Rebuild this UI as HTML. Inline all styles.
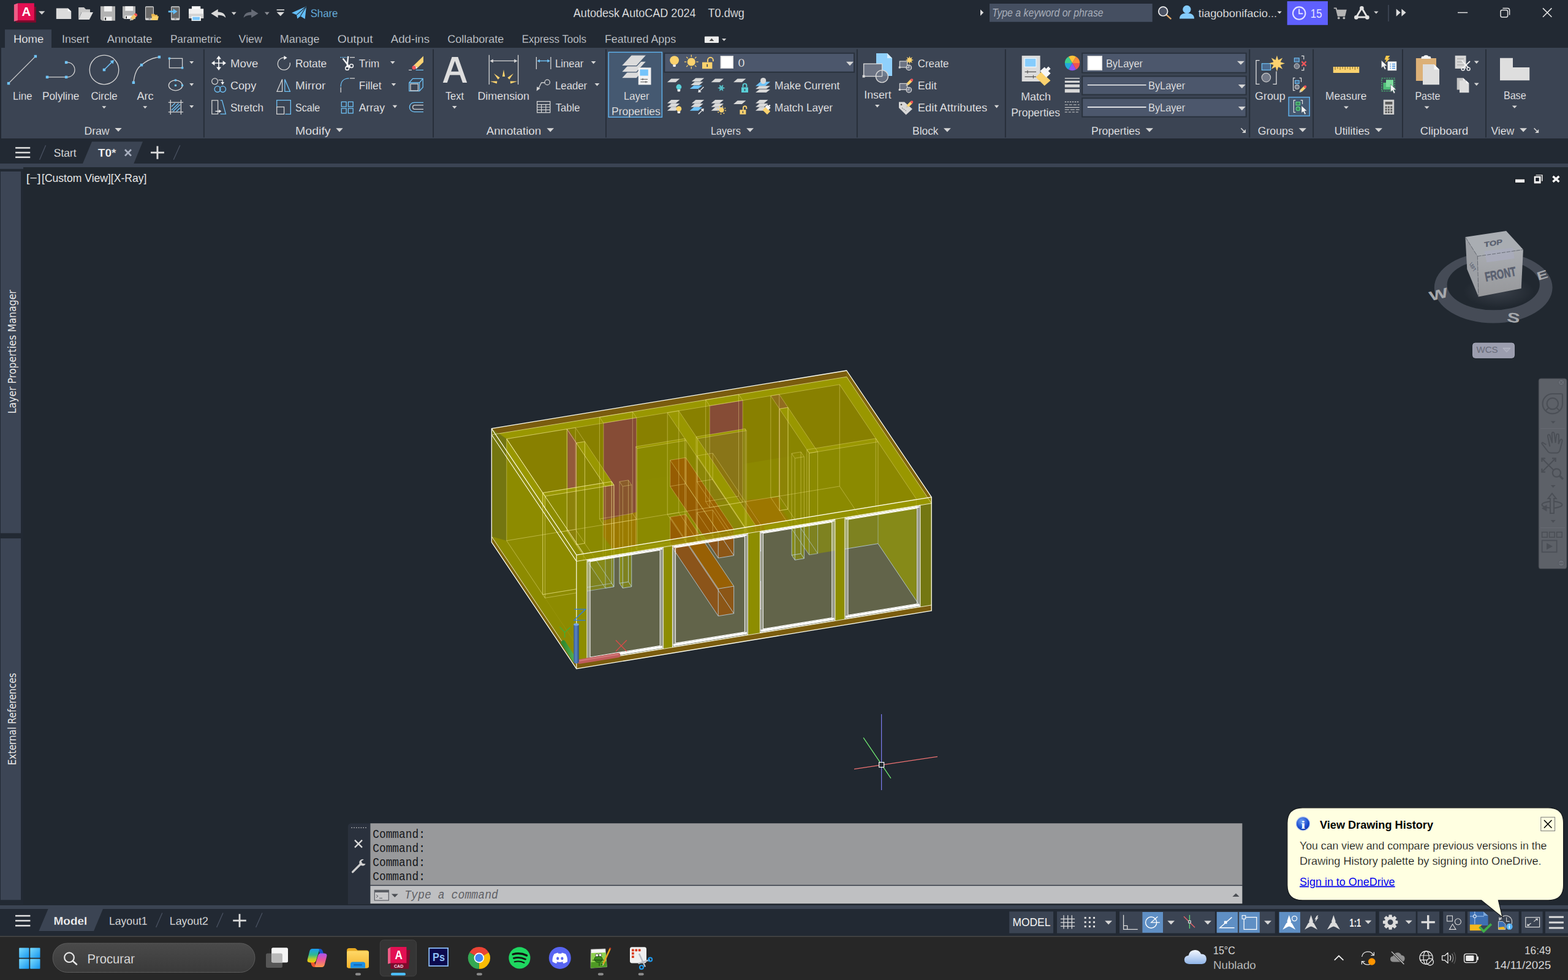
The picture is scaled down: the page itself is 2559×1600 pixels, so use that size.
<!DOCTYPE html>
<html lang="en"><head><meta charset="utf-8"><title>Autodesk AutoCAD 2024 - T0.dwg</title><style>html,body{margin:0;padding:0;background:#212830;overflow:hidden}body{width:2559px;height:1600px;position:relative;font-family:"Liberation Sans",sans-serif}.rg{position:absolute;overflow:hidden}.rg svg{display:block;position:absolute;left:0;top:0}text{font-family:"Liberation Sans",sans-serif;white-space:pre}#balloon{z-index:5}#cmdline{z-index:4}.mono text,text.mono{font-family:"Liberation Mono",monospace}</style></head>
<body>
<div id="titlebar" class="rg " style="left:0px;top:0px;width:2559px;height:48px;background:#222933;"><svg width="2559" height="48" viewBox="0 0 2559 48"><polygon points="26,10.9 58.9,10.9 58.9,36.8 26,36.8" fill="#7d0a2c"/><polygon points="22.9,7.4 29.1,5.2 29.1,33.2 22.9,35" fill="#ee5c86"/><rect x="29.1" y="5.2" width="26.7" height="28" fill="#e30f52"/><text x="35.4" y="26" font-size="21" fill="#fff" textLength="14.8" lengthAdjust="spacingAndGlyphs" font-weight="bold">A</text><polygon points="63,18.2 73.4,18.2 68.2,23.8" fill="#d0d0d0"/><polygon points="91.8,13.4 110.8,13.4 116.2,18.6 116.2,31 91.8,31" fill="#dcdcdc"/><polygon points="110.8,13.4 116.2,18.6 110.8,18.6" fill="#fafafa"/><polygon points="128.1,12 137,12 140.2,15.2 147,15.2 147,20 133,20 128.1,31.9" fill="#c8c8c8"/><polygon points="133.3,20 152,20 145.8,31.9 128.1,31.9" fill="#dedede"/><polygon points="164,10.2 188,10.2 188,33.7 166.7,33.7 164,31.5" fill="#b2b2b2"/><rect x="170" y="10.2" width="12.72" height="8.46" fill="#f2f2f2"/><rect x="169.52" y="27.36" width="12.96" height="6.35" fill="#f2f2f2"/><rect x="171.2" y="28.77" width="1.92" height="4" fill="#222"/><polygon points="200,10.2 221,10.2 221,31 202.5,31 200,29" fill="#b2b2b2"/><rect x="204.3" y="10.2" width="13" height="7.5" fill="#f2f2f2"/><rect x="203.6" y="25.5" width="12.5" height="5.5" fill="#f2f2f2"/><rect x="205.3" y="26.6" width="1.7" height="3.6" fill="#222"/><polygon points="212.2,33.6 213.3,28.6 219.3,22.6 223.2,26.5 217.2,32.5" fill="#f6c667"/><polygon points="212.2,33.6 213.3,28.6 217.2,32.5" fill="#bdbdbd"/><polygon points="218.6,23.3 220.2,21.7 222.6,21.9 224,23.4 224.2,25.6 222.6,27.2" fill="#ee5253"/><rect x="237" y="10.2" width="14" height="22.7" fill="#cfcfcf" rx="1.6"/><rect x="238.1" y="11.8" width="11.8" height="17.7" fill="#686868"/><rect x="242.5" y="30.5" width="3" height="1" fill="#555"/><polygon points="247.2,22.8 252,22.8 253.2,24.3 257,24.3 257,27 247.2,27" fill="#e9b64f"/><polygon points="248.4,26.6 259,26.6 257.4,32.9 246.8,32.9" fill="#fbd16a"/><rect x="279" y="10.2" width="14.3" height="22.7" fill="#cfcfcf" rx="1.6"/><rect x="280.1" y="11.8" width="12.1" height="17.7" fill="#686868"/><rect x="284.65" y="30.5" width="3" height="1" fill="#555"/><polygon points="274.7,17.4 282.6,17.4 282.6,14.2 289.6,18.8 282.6,23.4 282.6,20.2 274.7,20.2" fill="#63bdf6"/><rect x="313" y="10.2" width="14.2" height="5.8" fill="#ffffff"/><rect x="308" y="14.3" width="24.2" height="15.5" fill="#f0f0f0"/><rect x="308" y="22.5" width="24.2" height="7.3" fill="#d2d2d2"/><rect x="312.6" y="26.5" width="15.2" height="7.6" fill="#ffffff"/><rect x="314.2" y="27.6" width="11.8" height="5.2" fill="#7cc6fa"/><g transform="translate(344.3 15.1)"><path d="M0 7 L11.4 0 L11.4 4.3 C19 4.3 23.6 8 24 14 C21 10.6 17.5 9.7 11.4 9.7 L11.4 14 Z" fill="#d9d9d9"/></g><polygon points="377.8,19.8 385.7,19.8 381.75,24.4" fill="#d0d0d0"/><g transform="translate(421.6 15.1) scale(-1 1)"><path d="M0 7 L11.4 0 L11.4 4.3 C19 4.3 23.6 8 24 14 C21 10.6 17.5 9.7 11.4 9.7 L11.4 14 Z" fill="#666b76"/></g><polygon points="431.8,19.8 439.7,19.8 435.75,24.4" fill="#8a8d94"/><rect x="451.6" y="15.4" width="12.4" height="1.6" fill="#dcdcdc"/><polygon points="451.6,19.8 464,19.8 457.8,26.3" fill="#dcdcdc"/><polygon points="476,21.1 500,10.2 497.7,31 490.3,26.3 485.3,30.4 484.1,24.2" fill="#63bdf6"/><polyline points="484.3,24.2 499.4,11" fill="none" stroke="#222933" stroke-width="1.1"/><polyline points="490.3,26.3 499.6,11" fill="none" stroke="#222933" stroke-width="1.1"/><text x="506.7" y="27.6" font-size="18.5" fill="#72c4f8" textLength="44.7" lengthAdjust="spacingAndGlyphs" stroke="#222933" stroke-width="0.28">Share</text><text x="935.8" y="28.1" font-size="19.3" fill="#f8f8f8" textLength="279" lengthAdjust="spacingAndGlyphs" stroke="#222933" stroke-width="0.28" xml:space="preserve">Autodesk AutoCAD 2024    T0.dwg</text><polygon points="1600,15.5 1605.2,20.6 1600,25.7" fill="#dcdcdc"/><rect x="1615" y="6" width="265.7" height="29.7" fill="#454f61"/><text x="1618.9" y="27.2" font-size="18.3" fill="#a7adb9" textLength="181.7" lengthAdjust="spacingAndGlyphs" font-style="italic">Type a keyword or phrase</text><line x1="1903.6" y1="24.2" x2="1911.3" y2="31.2" stroke="#e2a86a" stroke-width="2.4"/><circle cx="1898.2" cy="18.6" r="7.4" fill="#4b5263" stroke="#f0f0f0" stroke-width="1.7"/><circle cx="1936.9" cy="15.4" r="6.6" fill="#84cbfb"/><path d="M1925 30.5 C1925 24 1930 21.6 1937 21.6 C1944 21.6 1949 24 1949 30.5 Z" fill="#84cbfb"/><text x="1955.8" y="27.6" font-size="18.5" fill="#f8f8f8" textLength="128.4" lengthAdjust="spacingAndGlyphs" stroke="#222933" stroke-width="0.28">tiagobonifacio...</text><polygon points="2084.6,18.6 2091.8,18.6 2088.2,22.6" fill="#e0e0e0"/><rect x="2100.7" y="2" width="66.3" height="38.8" fill="#5f60ff"/><circle cx="2120.2" cy="21.6" r="10.2" fill="none" stroke="#e2e2ff" stroke-width="2.1"/><polyline points="2120.2,14.6 2120.2,22.2 2126.4,22.2" fill="none" stroke="#e2e2ff" stroke-width="2"/><text x="2138.8" y="29.2" font-size="19.6" fill="#e4e4ff" textLength="18.8" lengthAdjust="spacingAndGlyphs">15</text><path d="M2176.8 13.4 H2180.6 L2183.6 25.8 H2194.4 L2196.6 16.8 H2181.6" fill="none" stroke="#b4b4b4" stroke-width="1.9"/><polygon points="2181.8,16.8 2196.6,16.8 2194.6,25 2183.8,25" fill="#b4b4b4"/><circle cx="2184.8" cy="29.4" r="1.9" fill="#b4b4b4"/><circle cx="2193.4" cy="29.4" r="1.9" fill="#b4b4b4"/><path d="M2222.4 13 L2231.6 28.4 M2222.4 13 L2213.2 28.4 M2213.6 28 H2231.2" fill="none" stroke="#e2e2e2" stroke-width="3"/><circle cx="2222.4" cy="13.2" r="3.3" fill="#e2e2e2"/><circle cx="2213.4" cy="28.4" r="3.3" fill="#e2e2e2"/><circle cx="2231.4" cy="28.4" r="3.3" fill="#e2e2e2"/><polygon points="2242.2,18.4 2249.6,18.4 2245.9,22.4" fill="#d0d0d0"/><rect x="2265.4" y="8" width="1.2" height="27" fill="#4a5262"/><polygon points="2278.7,14.4 2285.6,20.6 2278.7,26.8" fill="#dcdcdc"/><polygon points="2287.4,14.4 2294.6,20.6 2287.4,26.8" fill="#dcdcdc"/><rect x="2379" y="19.8" width="16.2" height="1.5" fill="#e4e4e4"/><rect x="2449" y="16.4" width="11.6" height="11.6" fill="none" stroke="#e4e4e4" stroke-width="1.5" rx="2.4"/><path d="M2452.4 13.4 H2460.4 Q2463.6 13.4 2463.6 16.6 V24.6" fill="none" stroke="#e4e4e4" stroke-width="1.5"/><path d="M2518 13.4 L2532.4 27.8 M2532.4 13.4 L2518 27.8" fill="none" stroke="#e4e4e4" stroke-width="1.6"/></svg></div>
<div id="menubar" class="rg " style="left:0px;top:48px;width:2559px;height:30px;background:#222933;"><svg width="2559" height="30" viewBox="0 48 2559 30"><rect x="8" y="48.2" width="76" height="29.8" fill="#3b4453"/><text x="21.9" y="70" font-size="18.5" fill="#fbfbfb" textLength="49.5" lengthAdjust="spacingAndGlyphs" stroke="#3b4453" stroke-width="0.28">Home</text><text x="101" y="70" font-size="18.5" fill="#d6d9de" textLength="44.5" lengthAdjust="spacingAndGlyphs" stroke="#222933" stroke-width="0.28">Insert</text><text x="174.7" y="70" font-size="18.5" fill="#d6d9de" textLength="73.9" lengthAdjust="spacingAndGlyphs" stroke="#222933" stroke-width="0.28">Annotate</text><text x="277.9" y="70" font-size="18.5" fill="#d6d9de" textLength="83.2" lengthAdjust="spacingAndGlyphs" stroke="#222933" stroke-width="0.28">Parametric</text><text x="389.6" y="70" font-size="18.5" fill="#d6d9de" textLength="38.3" lengthAdjust="spacingAndGlyphs" stroke="#222933" stroke-width="0.28">View</text><text x="456.8" y="70" font-size="18.5" fill="#d6d9de" textLength="64.7" lengthAdjust="spacingAndGlyphs" stroke="#222933" stroke-width="0.28">Manage</text><text x="550.7" y="70" font-size="18.5" fill="#d6d9de" textLength="57.8" lengthAdjust="spacingAndGlyphs" stroke="#222933" stroke-width="0.28">Output</text><text x="637.7" y="70" font-size="18.5" fill="#d6d9de" textLength="63.4" lengthAdjust="spacingAndGlyphs" stroke="#222933" stroke-width="0.28">Add-ins</text><text x="730.3" y="70" font-size="18.5" fill="#d6d9de" textLength="92.1" lengthAdjust="spacingAndGlyphs" stroke="#222933" stroke-width="0.28">Collaborate</text><text x="851.7" y="70" font-size="18.5" fill="#d6d9de" textLength="105.3" lengthAdjust="spacingAndGlyphs" stroke="#222933" stroke-width="0.28">Express Tools</text><text x="986.9" y="70" font-size="18.5" fill="#d6d9de" textLength="116.3" lengthAdjust="spacingAndGlyphs" stroke="#222933" stroke-width="0.28">Featured Apps</text><rect x="1149.9" y="59.6" width="23.1" height="10.4" fill="#ececec" rx="1"/><polygon points="1157.6,67 1165.2,67 1161.4,62.6" fill="#4a4a4a"/><polygon points="1178,63 1185.3,63 1181.65,67" fill="#d0d0d0"/></svg></div>
<div id="ribbon" class="rg " style="left:0px;top:78px;width:2559px;height:148px;background:#222933;"><svg width="2559" height="148" viewBox="0 78 2559 148"><rect x="2" y="78" width="2557" height="148" fill="#3b4453"/><rect x="331.9" y="80.5" width="1.9" height="144" fill="#272e39"/><rect x="706.1" y="80.5" width="1.9" height="144" fill="#272e39"/><rect x="988" y="80.5" width="1.9" height="144" fill="#272e39"/><rect x="1397.9" y="80.5" width="1.9" height="144" fill="#272e39"/><rect x="1639.9" y="80.5" width="1.9" height="144" fill="#272e39"/><rect x="2038.3" y="80.5" width="1.9" height="144" fill="#272e39"/><rect x="2142.2" y="80.5" width="1.9" height="144" fill="#272e39"/><rect x="2288" y="80.5" width="1.9" height="144" fill="#272e39"/><rect x="2424.1" y="80.5" width="1.9" height="144" fill="#272e39"/><line x1="14.5" y1="135.6" x2="57.6" y2="92.4" stroke="#d4d4d4" stroke-width="1.3"/><rect x="11.8" y="133.9" width="4.4" height="4.4" fill="#6fc3f8"/><rect x="55.7" y="89.8" width="4.4" height="4.4" fill="#6fc3f8"/><path d="M77 125.9 H108 M108.5 125.9 H110 A12 12 0 0 0 110 101.9 H108.5" fill="none" stroke="#d4d4d4" stroke-width="1.3"/><rect x="74.8" y="123.7" width="4.4" height="4.4" fill="#6fc3f8"/><rect x="105.9" y="123.7" width="4.4" height="4.4" fill="#6fc3f8"/><rect x="105.9" y="99.7" width="4.4" height="4.4" fill="#6fc3f8"/><circle cx="170" cy="114" r="23.8" fill="none" stroke="#d4d4d4" stroke-width="1.3"/><line x1="171.5" y1="112.5" x2="182.6" y2="101.4" stroke="#6fc3f8" stroke-width="1.5"/><polygon points="186,98 184.6,104.4 179.6,99.4" fill="#6fc3f8"/><rect x="167.8" y="111.8" width="4.4" height="4.4" fill="#6fc3f8"/><path d="M217.9 134.8 C219.5 120 224 110.5 231 106.1 C239 99 248 94.6 259.9 93.1" fill="none" stroke="#d4d4d4" stroke-width="1.3"/><rect x="215.7" y="132.6" width="4.4" height="4.4" fill="#6fc3f8"/><rect x="228.8" y="103.9" width="4.4" height="4.4" fill="#6fc3f8"/><rect x="257.7" y="90.9" width="4.4" height="4.4" fill="#6fc3f8"/><text x="21" y="162.8" font-size="18.4" fill="#fbfbfb" textLength="31.6" lengthAdjust="spacingAndGlyphs" stroke="#3b4453" stroke-width="0.28">Line</text><text x="69" y="162.8" font-size="18.4" fill="#fbfbfb" textLength="60.3" lengthAdjust="spacingAndGlyphs" stroke="#3b4453" stroke-width="0.28">Polyline</text><text x="148.4" y="162.8" font-size="18.4" fill="#fbfbfb" textLength="43.2" lengthAdjust="spacingAndGlyphs" stroke="#3b4453" stroke-width="0.28">Circle</text><text x="223.4" y="162.8" font-size="18.4" fill="#fbfbfb" textLength="27.2" lengthAdjust="spacingAndGlyphs" stroke="#3b4453" stroke-width="0.28">Arc</text><polygon points="166.4,173.2 173.4,173.2 169.9,177.2" fill="#d6d6d6"/><polygon points="233.3,173.2 240.3,173.2 236.8,177.2" fill="#d6d6d6"/><rect x="276.4" y="95.4" width="21.2" height="15.4" fill="none" stroke="#d4d4d4" stroke-width="1.3"/><rect x="274.7" y="93.7" width="3.4" height="3.4" fill="#6fc3f8"/><rect x="295.9" y="109.1" width="3.4" height="3.4" fill="#6fc3f8"/><polygon points="309.2,100 316.2,100 312.7,104.3" fill="#d6d6d6"/><ellipse cx="286.5" cy="139.4" rx="11.2" ry="8.4" fill="none" stroke="#d4d4d4" stroke-width="1.3"/><rect x="284.9" y="129.4" width="3.2" height="3.2" fill="#6fc3f8"/><rect x="284.9" y="137.8" width="3.2" height="3.2" fill="#6fc3f8"/><rect x="296" y="137.8" width="3.2" height="3.2" fill="#6fc3f8"/><polygon points="309.2,136 316.2,136 312.7,140.4" fill="#d6d6d6"/><g stroke="#d4d4d4" stroke-width="1.3"><line x1="278.3" y1="163" x2="278.3" y2="187"/><line x1="295.4" y1="163" x2="295.4" y2="187"/><line x1="274.8" y1="167.2" x2="299" y2="167.2"/><line x1="274.8" y1="182.9" x2="299" y2="182.9"/></g><g stroke="#6fc3f8" stroke-width="1.4"><line x1="280" y1="174" x2="285.6" y2="168.6"/><line x1="280" y1="180" x2="291.4" y2="168.8"/><line x1="282.4" y1="181.8" x2="294" y2="170.4"/><line x1="288" y1="181.8" x2="294" y2="176"/></g><polygon points="309.2,172.1 316.2,172.1 312.7,176.5" fill="#d6d6d6"/><text x="137.4" y="219.8" font-size="18.4" fill="#fbfbfb" textLength="41.2" lengthAdjust="spacingAndGlyphs" stroke="#3b4453" stroke-width="0.28">Draw</text><polygon points="187.5,209 198.7,209 193.1,215" fill="#d6d6d6"/><g transform="translate(345 91)"><path d="M12 3 V21 M3 12 H21" fill="none" stroke="#f4f4f4" stroke-width="1.7"/><polygon points="12,0 16,5.4 8,5.4" fill="#f4f4f4"/><polygon points="12,24 16,18.6 8,18.6" fill="#f4f4f4"/><polygon points="0,12 5.4,8 5.4,16" fill="#f4f4f4"/><polygon points="24,12 18.6,8 18.6,16" fill="#f4f4f4"/></g><g transform="translate(345 127)"><circle cx="5.6" cy="5.8" r="4.9" fill="none" stroke="#d4d4d4" stroke-width="1.3"/><path d="M11.6 3.6 H18.2 V8" fill="none" stroke="#d4d4d4" stroke-width="1.3"/><polygon points="18.2,11.4 15.4,7 21,7" fill="#f4f4f4"/><circle cx="10" cy="18.6" r="4.9" fill="none" stroke="#6fc3f8" stroke-width="1.3"/><circle cx="18.6" cy="18.6" r="4.9" fill="none" stroke="#6fc3f8" stroke-width="1.3"/></g><g transform="translate(345 163)"><path d="M10.6 0.8 H0.8 V23.2 H10.6 Z" fill="none" stroke="#d4d4d4" stroke-width="1.3"/><path d="M14.6 0.8 H17.4 L23.4 23.2 H14.6" fill="none" stroke="#6fc3f8" stroke-width="1.3"/><path d="M6.4 18.6 H13.4" fill="none" stroke="#f4f4f4" stroke-width="1.3"/><polygon points="16.4,18.6 12.4,16 12.4,21.2" fill="#f4f4f4"/></g><g transform="translate(452 91)"><path d="M13.2 3.3 A10 10 0 1 0 21.2 11.4" fill="none" stroke="#d4d4d4" stroke-width="1.3"/><polygon points="11.4,0 16.6,3.3 11.4,6.8" fill="#f4f4f4"/></g><g transform="translate(451 127)"><path d="M9.6 2.4 V22.4 H1 Z" fill="none" stroke="#d4d4d4" stroke-width="1.3"/><path d="M13.8 2.4 V22.4 H22.4 Z" fill="none" stroke="#6fc3f8" stroke-width="1.3"/></g><g transform="translate(451 163)"><path d="M0.7 11 V0.7 H23.3 V23.3 H14.6" fill="none" stroke="#6fc3f8" stroke-width="1.3"/><rect x="0.7" y="11.6" width="11.9" height="11.7" fill="none" stroke="#d4d4d4" stroke-width="1.3"/></g><g transform="translate(555 91)"><path d="M0.3 2.7 H11" fill="none" stroke="#6fc3f8" stroke-width="1.2" stroke-dasharray="2 1.2"/><path d="M16 2.7 H24" fill="none" stroke="#d4d4d4" stroke-width="1.3"/><path d="M4.6 4.4 L16.2 19.6 M13.2 0.8 L11.4 19" fill="none" stroke="#f4f4f4" stroke-width="2.4"/><circle cx="11.6" cy="20.4" r="2.9" fill="none" stroke="#f4f4f4" stroke-width="1.5"/><circle cx="18.6" cy="16.6" r="2.9" fill="none" stroke="#f4f4f4" stroke-width="1.5"/></g><g transform="translate(555 127)"><path d="M16 0.9 H24 M1.2 15.6 V24" fill="none" stroke="#d4d4d4" stroke-width="1.3"/><path d="M1.2 14.4 C1.2 6 6 0.9 14.6 0.9" fill="none" stroke="#6fc3f8" stroke-width="1.3"/></g><g transform="translate(555 163)"><rect x="2.3" y="3.3" width="7.8" height="7.8" fill="none" stroke="#6fc3f8" stroke-width="1.3"/><rect x="13.4" y="3.3" width="7.8" height="7.8" fill="none" stroke="#6fc3f8" stroke-width="1.3"/><rect x="2.3" y="14" width="7.8" height="7.8" fill="none" stroke="#6fc3f8" stroke-width="1.3"/><rect x="13.4" y="14" width="7.8" height="7.8" fill="none" stroke="#6fc3f8" stroke-width="1.3"/></g><g transform="translate(667 91)"><polygon points="9,15 24,0.6 24,10.4 14.6,19.6" fill="#fcd273"/><polygon points="9,15 14.6,19.6 12.4,21.6 7,17.2" fill="#f2f2f2"/><circle cx="8.6" cy="19.4" r="3.1" fill="#f0565a"/><path d="M0 23.4 H5" fill="none" stroke="#d4d4d4" stroke-width="1.2"/><path d="M11.6 23.4 H24" fill="none" stroke="#6fc3f8" stroke-width="1.2"/></g><g transform="translate(667 127)"><path d="M0.8 8 L6.6 1.4 H23.2 V15.4 L17.6 21.6 H0.8 Z M23.2 1.4 L17.6 8 M0.8 8 H17.6 V21.6" fill="none" stroke="#6fc3f8" stroke-width="1.3"/><rect x="3" y="10" width="12.4" height="11" fill="none" stroke="#d4d4d4" stroke-width="1.3"/></g><g transform="translate(667 163)"><path d="M24 4.4 H9 A7.6 7.6 0 0 0 9 19.6 H24" fill="none" stroke="#6fc3f8" stroke-width="1.4"/><path d="M24 8.6 H10 A3.4 3.4 0 0 0 10 15.4 H24" fill="none" stroke="#d4d4d4" stroke-width="1.3"/></g><text x="376" y="110.2" font-size="18.4" fill="#fbfbfb" textLength="45.4" lengthAdjust="spacingAndGlyphs" stroke="#3b4453" stroke-width="0.28">Move</text><text x="376" y="145.9" font-size="18.4" fill="#fbfbfb" textLength="42.2" lengthAdjust="spacingAndGlyphs" stroke="#3b4453" stroke-width="0.28">Copy</text><text x="376" y="182" font-size="18.4" fill="#fbfbfb" textLength="54" lengthAdjust="spacingAndGlyphs" stroke="#3b4453" stroke-width="0.28">Stretch</text><text x="482.1" y="110.2" font-size="18.4" fill="#fbfbfb" textLength="51.1" lengthAdjust="spacingAndGlyphs" stroke="#3b4453" stroke-width="0.28">Rotate</text><text x="482.1" y="145.9" font-size="18.4" fill="#fbfbfb" textLength="49.2" lengthAdjust="spacingAndGlyphs" stroke="#3b4453" stroke-width="0.28">Mirror</text><text x="482.1" y="182" font-size="18.4" fill="#fbfbfb" textLength="40.1" lengthAdjust="spacingAndGlyphs" stroke="#3b4453" stroke-width="0.28">Scale</text><text x="585.8" y="110.2" font-size="18.4" fill="#fbfbfb" textLength="33.5" lengthAdjust="spacingAndGlyphs" stroke="#3b4453" stroke-width="0.28">Trim</text><text x="585.8" y="145.9" font-size="18.4" fill="#fbfbfb" textLength="36.7" lengthAdjust="spacingAndGlyphs" stroke="#3b4453" stroke-width="0.28">Fillet</text><text x="585.8" y="182" font-size="18.4" fill="#fbfbfb" textLength="42.2" lengthAdjust="spacingAndGlyphs" stroke="#3b4453" stroke-width="0.28">Array</text><polygon points="637,100 644.6,100 640.8,104.6" fill="#d6d6d6"/><polygon points="638.7,135.9 646.2,135.9 642.45,140.5" fill="#d6d6d6"/><polygon points="640.7,171.8 648.2,171.8 644.45,176.4" fill="#d6d6d6"/><text x="482.1" y="220.2" font-size="18.4" fill="#fbfbfb" textLength="57.5" lengthAdjust="spacingAndGlyphs" stroke="#3b4453" stroke-width="0.28">Modify</text><polygon points="548.3,209.2 559.7,209.2 554,215.4" fill="#d6d6d6"/><polygon points="722.8,134.9 737.6,93 747.4,93 762.2,134.9 755,134.9 750.6,122.4 734.2,122.4 729.8,134.9" fill="#dedede"/><polygon points="742.4,99.4 748.6,116.8 736.2,116.8" fill="#3b4453"/><text x="726.9" y="162.8" font-size="18.4" fill="#fbfbfb" textLength="30.2" lengthAdjust="spacingAndGlyphs" stroke="#3b4453" stroke-width="0.28">Text</text><polygon points="738,173 745.6,173 741.8,177.6" fill="#d6d6d6"/><path d="M798.3 89.8 V138 M845.6 89.8 V138 M803 99.4 H841" fill="none" stroke="#d4d4d4" stroke-width="1.3"/><polygon points="799.4,99.4 804.8,96.4 804.8,102.4" fill="#d4d4d4"/><polygon points="844.6,99.4 839.2,96.4 839.2,102.4" fill="#d4d4d4"/><polygon points="822,113.5 824.1,125 819.9,125" fill="#fbd26e"/><polygon points="837.91,120.09 831.26,129.71 828.29,126.74" fill="#fbd26e"/><polygon points="806.09,120.09 815.71,126.74 812.74,129.71" fill="#fbd26e"/><polygon points="844.28,132.87 833.19,136.55 832.6,132.39" fill="#fbd26e"/><polygon points="799.72,132.87 811.4,132.39 810.81,136.55" fill="#fbd26e"/><text x="779.4" y="162.8" font-size="18.4" fill="#fbfbfb" textLength="84.6" lengthAdjust="spacingAndGlyphs" stroke="#3b4453" stroke-width="0.28">Dimension</text><path d="M875.4 93 V113 M898.9 93 V113" fill="none" stroke="#d4d4d4" stroke-width="1.3"/><path d="M879 99.4 H895" fill="none" stroke="#6fc3f8" stroke-width="1.4"/><polygon points="876.4,99.4 881,96.8 881,102" fill="#6fc3f8"/><polygon points="897.9,99.4 893.3,96.8 893.3,102" fill="#6fc3f8"/><text x="906" y="110.2" font-size="18.4" fill="#fbfbfb" textLength="46.4" lengthAdjust="spacingAndGlyphs" stroke="#3b4453" stroke-width="0.28">Linear</text><polygon points="964.7,100 972.5,100 968.6,104.4" fill="#d6d6d6"/><circle cx="893.2" cy="134.4" r="4.2" fill="none" stroke="#d4d4d4" stroke-width="1.3"/><path d="M889 135 H883.6 L878.6 145" fill="none" stroke="#d4d4d4" stroke-width="1.3"/><polygon points="875.6,148.4 876.2,141.6 881.6,144.4" fill="#d4d4d4"/><text x="906" y="145.9" font-size="18.4" fill="#fbfbfb" textLength="52.2" lengthAdjust="spacingAndGlyphs" stroke="#3b4453" stroke-width="0.28">Leader</text><polygon points="970.5,135.9 978.4,135.9 974.45,140.4" fill="#d6d6d6"/><rect x="876.6" y="165.6" width="21.2" height="18.2" fill="none" stroke="#d4d4d4" stroke-width="1.3"/><path d="M876.6 170.6 H897.8 M876.6 175 H897.8 M876.6 179.4 H897.8 M883.6 170.6 V183.8 M890.8 170.6 V183.8" fill="none" stroke="#d4d4d4" stroke-width="1.2"/><text x="906.8" y="182" font-size="18.4" fill="#fbfbfb" textLength="39.6" lengthAdjust="spacingAndGlyphs" stroke="#3b4453" stroke-width="0.28">Table</text><text x="793.7" y="220.2" font-size="18.4" fill="#fbfbfb" textLength="89.4" lengthAdjust="spacingAndGlyphs" stroke="#3b4453" stroke-width="0.28">Annotation</text><polygon points="892.4,209.2 904,209.2 898.2,215.4" fill="#d6d6d6"/><rect x="993.2" y="85.3" width="87.2" height="106" fill="#455971" stroke="#5fb0ea" stroke-width="1.5"/><polygon points="1030.3,110 1055.4,110 1039,127.8 1013.9,127.8" fill="#dcdcdc" stroke="#455971" stroke-width="1.3"/><polygon points="1030.3,100 1055.4,100 1039,117.8 1013.9,117.8" fill="#dcdcdc" stroke="#455971" stroke-width="1.3"/><polygon points="1030.3,89.8 1055.4,89.8 1039,107.6 1013.9,107.6" fill="#dcdcdc" stroke="#455971" stroke-width="1.3"/><rect x="1041.8" y="110.4" width="20.7" height="28" fill="#f2f2f2"/><rect x="1044.4" y="113.4" width="13.4" height="10.2" fill="#74c4fb"/><path d="M1045.4 129.4 H1057 M1045.4 133.8 H1057 M1049 127.8 V131 M1054 132.2 V135.4" fill="none" stroke="#555" stroke-width="1"/><text x="1017.9" y="162.7" font-size="18.4" fill="#fbfbfb" textLength="41.7" lengthAdjust="spacingAndGlyphs" stroke="#3b4453" stroke-width="0.28">Layer</text><text x="998.1" y="187.7" font-size="18.4" fill="#fbfbfb" textLength="79.7" lengthAdjust="spacingAndGlyphs" stroke="#3b4453" stroke-width="0.28">Properties</text><rect x="1084.3" y="86.8" width="309.7" height="31" fill="#4c576c" stroke="#2a323e" stroke-width="2"/><circle cx="1100.6" cy="98.6" r="7.4" fill="#fbd26e"/><polygon points="1098,105.6 1103.2,105.6 1102.5,109 1098.7,109" fill="#f4f4f4"/><circle cx="1128.3" cy="101" r="6.6" fill="#fbd26e"/><line x1="1136.3" y1="101" x2="1139.7" y2="101" stroke="#fbd26e" stroke-width="1.3"/><line x1="1133.96" y1="106.66" x2="1136.36" y2="109.06" stroke="#fbd26e" stroke-width="1.3"/><line x1="1128.3" y1="109" x2="1128.3" y2="112.4" stroke="#fbd26e" stroke-width="1.3"/><line x1="1122.64" y1="106.66" x2="1120.24" y2="109.06" stroke="#fbd26e" stroke-width="1.3"/><line x1="1120.3" y1="101" x2="1116.9" y2="101" stroke="#fbd26e" stroke-width="1.3"/><line x1="1122.64" y1="95.34" x2="1120.24" y2="92.94" stroke="#fbd26e" stroke-width="1.3"/><line x1="1128.3" y1="93" x2="1128.3" y2="89.6" stroke="#fbd26e" stroke-width="1.3"/><line x1="1133.96" y1="95.34" x2="1136.36" y2="92.94" stroke="#fbd26e" stroke-width="1.3"/><rect x="1146" y="101.6" width="16.4" height="10.6" fill="#fbd26e"/><path d="M1155.02 101.6 V98.2 A4.43 4.43 0 0 1 1163.88 98.2 V100.2" fill="none" stroke="#fbd26e" stroke-width="1.9"/><rect x="1153.4" y="104.78" width="1.6" height="4.45" fill="#3b4453"/><rect x="1175.8" y="91" width="21.2" height="21" fill="#ffffff"/><rect x="1176.5" y="91.7" width="19.8" height="19.6" fill="none" stroke="#dcdcdc" stroke-width="1.4"/><text x="1204.4" y="109.4" font-size="18.4" fill="#fbfbfb" textLength="10.9" lengthAdjust="spacingAndGlyphs" stroke="#3b4453" stroke-width="0.28">0</text><polygon points="1381,100.8 1393,100.8 1387,107.2" fill="#d6d6d6"/><g transform="translate(1088.9 127)"><polygon points="6.6,1.6 20.4,1.6 13.8,7.2 0,7.2" fill="#d8d8d8"/><circle cx="19" cy="15" r="4.4" fill="#59d0d8"/><polygon points="16.4,19 21.6,19 20.9,22.4 17.1,22.4" fill="#f4f4f4"/></g><g transform="translate(1125.8 127)"><polygon points="9.6,0.4 23.4,0.4 16.8,6 3,6" fill="#d8d8d8"/><polygon points="8.1,6.4 21.9,6.4 15.3,12 1.5,12" fill="#d8d8d8"/><polygon points="6.6,12.4 20.4,12.4 13.8,18 0,18" fill="#6fc3f8"/><path d="M22.6 15 L16.4 21.2" fill="none" stroke="#f2f2f2" stroke-width="1.3"/><polygon points="13.6,24 14.4,18.8 18.8,23.2" fill="#f2f2f2"/></g><g transform="translate(1160.6 127)"><polygon points="6.6,1.6 20.4,1.6 13.8,7.2 0,7.2" fill="#d8d8d8"/><line x1="22" y1="16.6" x2="11.2" y2="16.6" stroke="#59d0d8" stroke-width="1.3"/><line x1="19.3" y1="21.28" x2="13.9" y2="11.92" stroke="#59d0d8" stroke-width="1.3"/><line x1="13.9" y1="21.28" x2="19.3" y2="11.92" stroke="#59d0d8" stroke-width="1.3"/><circle cx="16.6" cy="16.6" r="3" fill="none" stroke="#59d0d8" stroke-width="1"/></g><g transform="translate(1197 127)"><polygon points="6.6,1.6 20.4,1.6 13.8,7.2 0,7.2" fill="#d8d8d8"/><rect x="13" y="15.6" width="11" height="8.4" fill="#59d0d8"/><path d="M15.53 15.6 V12.6 A2.97 2.97 0 0 1 21.47 12.6 V15.6" fill="none" stroke="#59d0d8" stroke-width="1.9"/><rect x="17.7" y="18.12" width="1.6" height="3.53" fill="#3b4453"/></g><g transform="translate(1232.6 127)"><circle cx="13" cy="4.6" r="4.6" fill="#d8d8d8"/><polygon points="8.4,6.6 24.4,6.6 16.4,13.6 0.4,13.6" fill="#6fc3f8"/><circle cx="13" cy="5.6" r="4.4" fill="#d8d8d8"/><polygon points="6.8,13.2 24.4,13.2 18,18.2 0.4,18.2" fill="#d8d8d8"/><polygon points="6.8,19 24.4,19 18,24 0.4,24" fill="#d8d8d8"/></g><text x="1264.1" y="145.7" font-size="18.4" fill="#fbfbfb" textLength="106.3" lengthAdjust="spacingAndGlyphs" stroke="#3b4453" stroke-width="0.28">Make Current</text><g transform="translate(1088.9 162.7)"><polygon points="6.6,0.4 20.4,0.4 13.8,6 0,6" fill="#d8d8d8"/><polygon points="6.6,6.4 20.4,6.4 13.8,12 0,12" fill="#d8d8d8"/><polygon points="6.6,12.4 20.4,12.4 13.8,18 0,18" fill="#d8d8d8"/><circle cx="19" cy="15" r="4.4" fill="#fbd26e"/><polygon points="16.4,19 21.6,19 20.9,22.4 17.1,22.4" fill="#f4f4f4"/></g><g transform="translate(1125.8 162.7)"><polygon points="9.6,0.4 23.4,0.4 16.8,6 3,6" fill="#d8d8d8"/><polygon points="8.1,6.4 21.9,6.4 15.3,12 1.5,12" fill="#d8d8d8"/><polygon points="6.6,12.4 20.4,12.4 13.8,18 0,18" fill="#6fc3f8"/><path d="M14 23.6 L20.2 17.4" fill="none" stroke="#f2f2f2" stroke-width="1.3"/><polygon points="23,14.6 22.2,19.8 17.8,15.4" fill="#f2f2f2"/></g><g transform="translate(1160.6 162.7)"><polygon points="6.6,0.4 20.4,0.4 13.8,6 0,6" fill="#d8d8d8"/><polygon points="6.6,6.4 20.4,6.4 13.8,12 0,12" fill="#d8d8d8"/><polygon points="6.6,12.4 20.4,12.4 13.8,18 0,18" fill="#d8d8d8"/><circle cx="17" cy="17" r="4" fill="#fbd26e"/><circle cx="17" cy="17" r="6.4" fill="none" stroke="#fbd26e" stroke-width="1.7" stroke-dasharray="1.7 3.33"/></g><g transform="translate(1197 162.7)"><polygon points="6.6,1.6 20.4,1.6 13.8,7.2 0,7.2" fill="#d8d8d8"/><rect x="10.4" y="16.6" width="10" height="7.4" fill="#fbd26e"/><path d="M15.9 16.6 V13.2 A2.7 2.7 0 0 1 21.3 13.2 V15.2" fill="none" stroke="#fbd26e" stroke-width="1.9"/><rect x="14.6" y="18.82" width="1.6" height="3.11" fill="#3b4453"/></g><g transform="translate(1232.6 162.7)"><polygon points="7,0.4 20.8,0.4 14.2,6 0.4,6" fill="#d8d8d8"/><polygon points="7,6.4 20.8,6.4 14.2,12 0.4,12" fill="#d8d8d8"/><polygon points="7,12.4 20.8,12.4 14.2,18 0.4,18" fill="#d8d8d8"/><polygon points="12,17 17,12 24.6,19 19.4,24.4" fill="#fbd26e"/><polygon points="16,11.6 19.6,8 21.4,9.8 23.4,8 25,9.6 23.2,11.6 25,13.4 21.4,17" fill="#f4f4f4"/></g><text x="1264.1" y="181.8" font-size="18.4" fill="#fbfbfb" textLength="95" lengthAdjust="spacingAndGlyphs" stroke="#3b4453" stroke-width="0.28">Match Layer</text><text x="1160" y="220" font-size="18.4" fill="#fbfbfb" textLength="48.9" lengthAdjust="spacingAndGlyphs" stroke="#3b4453" stroke-width="0.28">Layers</text><polygon points="1218.2,209.2 1230,209.2 1224.1,215.4" fill="#d6d6d6"/><polygon points="1430,87 1448,87 1456,95 1456,124 1430,124" fill="#8fd0fc"/><polygon points="1448,87 1456,95 1448,95" fill="#d6edfd"/><rect x="1409.6" y="104.2" width="30" height="20.4" fill="#6c7383" stroke="#d8d8d8" stroke-width="1.4"/><circle cx="1439.4" cy="124.6" r="10" fill="#6c7383" stroke="#d8d8d8" stroke-width="1.4" fill-opacity="0.9"/><path d="M1439.6 114.6 V124.6 H1429.6" fill="none" stroke="#d8d8d8" stroke-width="1.2"/><rect x="1407.6" y="122.6" width="4" height="4" fill="#d8d8d8"/><text x="1410.3" y="161" font-size="18.4" fill="#fbfbfb" textLength="44.3" lengthAdjust="spacingAndGlyphs" stroke="#3b4453" stroke-width="0.28">Insert</text><polygon points="1428,171 1435.5,171 1431.75,175.6" fill="#d6d6d6"/><rect x="1468.3" y="100" width="12.4" height="10" fill="#6c7383" stroke="#d8d8d8" stroke-width="1.2"/><rect x="1466.7" y="108.6" width="3" height="3" fill="#d8d8d8"/><circle cx="1483.3" cy="110.4" r="4.3" fill="#6c7383" stroke="#d8d8d8" stroke-width="1.2"/><path d="M1483.3 106.2 V110.4 H1479.1" fill="none" stroke="#d8d8d8" stroke-width="1"/><polygon points="1484.4,91.4 1485.62,95.04 1489.07,93.33 1487.36,96.78 1491,98 1487.36,99.22 1489.07,102.67 1485.62,100.96 1484.4,104.6 1483.18,100.96 1479.73,102.67 1481.44,99.22 1477.8,98 1481.44,96.78 1479.73,93.33 1483.18,95.04" fill="#fbd26e"/><text x="1497.8" y="110.2" font-size="18.4" fill="#fbfbfb" textLength="50.7" lengthAdjust="spacingAndGlyphs" stroke="#3b4453" stroke-width="0.28">Create</text><rect x="1468.3" y="136.4" width="12.4" height="10" fill="#6c7383" stroke="#d8d8d8" stroke-width="1.2"/><rect x="1466.7" y="145" width="3" height="3" fill="#d8d8d8"/><circle cx="1483.3" cy="146.8" r="4.3" fill="#6c7383" stroke="#d8d8d8" stroke-width="1.2"/><path d="M1483.3 142.6 V146.8 H1479.1" fill="none" stroke="#d8d8d8" stroke-width="1"/><polygon points="1478.6,140 1479.8,135.8 1486,129.6 1489.2,132.8 1482.8,138.8" fill="#fbd26e"/><polygon points="1478.6,140 1479.8,135.8 1482.8,138.8" fill="#c8c8c8"/><polygon points="1485.2,130.4 1487,128.6 1489,128.4 1490.2,129.6 1490,131.6 1488.2,133.4" fill="#f0565a"/><text x="1497.8" y="145.9" font-size="18.4" fill="#fbfbfb" textLength="31" lengthAdjust="spacingAndGlyphs" stroke="#3b4453" stroke-width="0.28">Edit</text><polygon points="1467,166.6 1476,166.6 1489,178 1478.6,187.4 1467,176" fill="#d8d8d8"/><circle cx="1471" cy="170.8" r="1.3" fill="#444"/><path d="M1472 176 L1480 182" fill="none" stroke="#666" stroke-width="1" stroke-dasharray="2 1.4"/><polygon points="1478.6,176 1479.8,171.8 1486,165.6 1489.2,168.8 1482.8,174.8" fill="#fbd26e"/><polygon points="1478.6,176 1479.8,171.8 1482.8,174.8" fill="#c8c8c8"/><polygon points="1485.2,166.4 1487,164.6 1489,164.4 1490.2,165.6 1490,167.6 1488.2,169.4" fill="#f0565a"/><text x="1497.8" y="182" font-size="18.4" fill="#fbfbfb" textLength="113.5" lengthAdjust="spacingAndGlyphs" stroke="#3b4453" stroke-width="0.28">Edit Attributes</text><polygon points="1622.8,171.8 1630.3,171.8 1626.55,176.4" fill="#d6d6d6"/><text x="1489.1" y="220.2" font-size="18.4" fill="#fbfbfb" textLength="42.4" lengthAdjust="spacingAndGlyphs" stroke="#3b4453" stroke-width="0.28">Block</text><polygon points="1540,209.2 1551.8,209.2 1545.9,215.4" fill="#d6d6d6"/><rect x="1667.7" y="90.9" width="29.9" height="42.1" fill="#dcdcdc"/><rect x="1671.6" y="94.6" width="20" height="15.4" fill="#86ccfc"/><rect x="1672.2" y="95.2" width="18.8" height="14.2" fill="none" stroke="#fafafa" stroke-width="1.2"/><path d="M1672.6 117.4 H1691 M1672.6 125.4 H1691 M1677 114.8 V120 M1686.4 122.8 V128" fill="none" stroke="#555" stroke-width="1.1"/><polygon points="1690.4,126 1699.4,117.4 1714.4,131.4 1704.6,140" fill="#fbd26e"/><polygon points="1697.4,116 1704.6,109.4 1707.4,112.2 1711,108.6 1714.6,112.4 1710.8,116 1714.6,119.8 1707.6,126.4" fill="#f6f6f6"/><text x="1666.2" y="164" font-size="18.4" fill="#fbfbfb" textLength="48.8" lengthAdjust="spacingAndGlyphs" stroke="#3b4453" stroke-width="0.28">Match</text><text x="1650.2" y="189.5" font-size="18.4" fill="#fbfbfb" textLength="79.7" lengthAdjust="spacingAndGlyphs" stroke="#3b4453" stroke-width="0.28">Properties</text><path d="M1750 103 L1743.9 92.43 A12.2 12.2 0 0 1 1756.1 92.43 Z" fill="#fdc33a"/><path d="M1750 103 L1756.1 92.43 A12.2 12.2 0 0 1 1762.2 103 Z" fill="#fb8b3c"/><path d="M1750 103 L1762.2 103 A12.2 12.2 0 0 1 1756.1 113.57 Z" fill="#ee5253"/><path d="M1750 103 L1756.1 113.57 A12.2 12.2 0 0 1 1743.9 113.57 Z" fill="#8c52f6"/><path d="M1750 103 L1743.9 113.57 A12.2 12.2 0 0 1 1737.8 103 Z" fill="#22a9d9"/><path d="M1750 103 L1737.8 103 A12.2 12.2 0 0 1 1743.9 92.43 Z" fill="#3ecf8e"/><rect x="1737.8" y="127.2" width="24.2" height="1.4" fill="#d8d8d8"/><rect x="1737.8" y="131.8" width="24.2" height="3.2" fill="#d8d8d8"/><rect x="1737.8" y="137.8" width="24.2" height="4.8" fill="#d8d8d8"/><rect x="1737.8" y="145.4" width="24.2" height="5.8" fill="#d8d8d8"/><line x1="1737.8" y1="166.4" x2="1761.6" y2="166.4" stroke="#d0d0d0" stroke-width="1.1" stroke-dasharray="2.4 1.6"/><line x1="1737.8" y1="171" x2="1761.6" y2="171" stroke="#d0d0d0" stroke-width="1.1" stroke-dasharray="5 2"/><line x1="1737.8" y1="175.4" x2="1761.6" y2="175.4" stroke="#d0d0d0" stroke-width="1.1" stroke-dasharray="24"/><line x1="1737.8" y1="179" x2="1761.6" y2="179" stroke="#d0d0d0" stroke-width="1.1" stroke-dasharray="7 2"/><line x1="1737.8" y1="183" x2="1761.6" y2="183" stroke="#d0d0d0" stroke-width="1.1" stroke-dasharray="4 2"/><rect x="1766.2" y="86.8" width="267.5" height="31.9" fill="#4c576c" stroke="#2a323e" stroke-width="2"/><rect x="1766.2" y="124.5" width="267.5" height="30.1" fill="#4c576c" stroke="#2a323e" stroke-width="2"/><rect x="1766.2" y="160.3" width="267.5" height="30.4" fill="#4c576c" stroke="#2a323e" stroke-width="2"/><rect x="1774.8" y="91" width="24.2" height="23.8" fill="#ffffff"/><rect x="1775.5" y="91.7" width="22.8" height="22.4" fill="none" stroke="#dcdcdc" stroke-width="1.4"/><text x="1804.9" y="109.8" font-size="18.4" fill="#fbfbfb" textLength="60.2" lengthAdjust="spacingAndGlyphs" stroke="#3b4453" stroke-width="0.28">ByLayer</text><polygon points="2019,99.7 2031,99.7 2025,105.8" fill="#d6d6d6"/><line x1="1774.8" y1="138.8" x2="1870.6" y2="138.8" stroke="#f4f4f4" stroke-width="1.6"/><text x="1874" y="146" font-size="18.4" fill="#fbfbfb" textLength="60.1" lengthAdjust="spacingAndGlyphs" stroke="#3b4453" stroke-width="0.28">ByLayer</text><polygon points="2020.8,137.9 2032.8,137.9 2026.8,144.2" fill="#d6d6d6"/><line x1="1774.8" y1="174.9" x2="1870.6" y2="174.9" stroke="#f4f4f4" stroke-width="1.6"/><text x="1874" y="182.2" font-size="18.4" fill="#fbfbfb" textLength="60.1" lengthAdjust="spacingAndGlyphs" stroke="#3b4453" stroke-width="0.28">ByLayer</text><polygon points="2020.8,173.9 2032.8,173.9 2026.8,180.2" fill="#d6d6d6"/><text x="1781.1" y="220" font-size="18.4" fill="#fbfbfb" textLength="79.7" lengthAdjust="spacingAndGlyphs" stroke="#3b4453" stroke-width="0.28">Properties</text><polygon points="1869.8,209.2 1882,209.2 1875.9,215.4" fill="#d6d6d6"/><path d="M2025.4 209.4 l5.6 5.6" fill="none" stroke="#d0d0d0" stroke-width="1.5"/><polygon points="2033,211 2033,217 2027,217" fill="#d0d0d0"/><path d="M2055.6 98.6 H2050 V137.4 H2055.6 M2077.4 137.4 H2083 V116.4" fill="none" stroke="#e0e0e0" stroke-width="1.3"/><rect x="2059.4" y="103.8" width="14.2" height="10.6" fill="#4b6b90" stroke="#6fc3f8" stroke-width="1.2"/><circle cx="2066.4" cy="126.6" r="7.2" fill="#747a88" stroke="#c8c8c8" stroke-width="1.2"/><polygon points="2084,90.6 2086.3,98.06 2093.19,94.41 2089.54,101.3 2097,103.6 2089.54,105.9 2093.19,112.79 2086.3,109.14 2084,116.6 2081.7,109.14 2074.81,112.79 2078.46,105.9 2071,103.6 2078.46,101.3 2074.81,94.41 2081.7,98.06" fill="#fbd26e"/><text x="2048" y="162.5" font-size="18.4" fill="#fbfbfb" textLength="49.8" lengthAdjust="spacingAndGlyphs" stroke="#3b4453" stroke-width="0.28">Group</text><rect x="2112.4" y="94.8" width="7.8" height="6.2" fill="#4b6b90" stroke="#6fc3f8" stroke-width="1.1"/><circle cx="2116.4" cy="108" r="4.2" fill="#747a88" stroke="#c8c8c8" stroke-width="1.1"/><path d="M2124 91.4 H2127.8 V97 M2127.8 110 V114.6 H2124" fill="none" stroke="#e0e0e0" stroke-width="1.2"/><path d="M2124.4 100.4 L2131.6 107.6 M2131.6 100.4 L2124.4 107.6" fill="none" stroke="#f0565a" stroke-width="2.2"/><path d="M2113.6 127.4 H2110.6 V147.6 H2113.6 M2120.6 127.4 H2123.6 V134" fill="none" stroke="#e0e0e0" stroke-width="1.2"/><rect x="2113.6" y="131.4" width="6.6" height="5" fill="#4b6b90" stroke="#6fc3f8" stroke-width="1.1"/><circle cx="2116.8" cy="142" r="3.4" fill="#747a88" stroke="#c8c8c8" stroke-width="1.1"/><polygon points="2120.6,151 2121.8,146.8 2128,140.6 2131.2,143.8 2124.8,149.8" fill="#fbd26e"/><polygon points="2120.6,151 2121.8,146.8 2124.8,149.8" fill="#c8c8c8"/><polygon points="2127.2,141.4 2129,139.6 2131,139.4 2132.2,140.6 2132,142.6 2130.2,144.4" fill="#f0565a"/><rect x="2103.2" y="158.7" width="34" height="30.6" fill="#455971" stroke="#5fb0ea" stroke-width="1.5"/><path d="M2114.4 163.6 H2111.4 V183.4 H2114.4 M2122.6 163.6 H2125.6 V170" fill="none" stroke="#e0e0e0" stroke-width="1.2"/><rect x="2115" y="166.6" width="6.6" height="5" fill="#3a8f5a" stroke="#62d58b" stroke-width="1.1"/><circle cx="2118.4" cy="177.6" r="3.2" fill="#3a8f5a" stroke="#62d58b" stroke-width="1.1"/><polygon points="2124,172.4 2124,184.58 2126.94,182.06 2129.25,186.89 2131.35,185.84 2129.14,181.22 2133.03,181.01" fill="#f6f6f6" stroke="#3b4453" stroke-width="0.5"/><text x="2052.7" y="220" font-size="18.4" fill="#fbfbfb" textLength="58.1" lengthAdjust="spacingAndGlyphs" stroke="#3b4453" stroke-width="0.28">Groups</text><polygon points="2119.8,209.2 2132,209.2 2125.9,215.4" fill="#d6d6d6"/><rect x="2175.8" y="109" width="42.5" height="10" fill="#fbd26e"/><line x1="2179" y1="109" x2="2179" y2="114" stroke="#8a6d2a" stroke-width="1"/><line x1="2183.05" y1="109" x2="2183.05" y2="112.4" stroke="#8a6d2a" stroke-width="1"/><line x1="2187.1" y1="109" x2="2187.1" y2="114" stroke="#8a6d2a" stroke-width="1"/><line x1="2191.15" y1="109" x2="2191.15" y2="112.4" stroke="#8a6d2a" stroke-width="1"/><line x1="2195.2" y1="109" x2="2195.2" y2="114" stroke="#8a6d2a" stroke-width="1"/><line x1="2199.25" y1="109" x2="2199.25" y2="112.4" stroke="#8a6d2a" stroke-width="1"/><line x1="2203.3" y1="109" x2="2203.3" y2="114" stroke="#8a6d2a" stroke-width="1"/><line x1="2207.35" y1="109" x2="2207.35" y2="112.4" stroke="#8a6d2a" stroke-width="1"/><line x1="2211.4" y1="109" x2="2211.4" y2="114" stroke="#8a6d2a" stroke-width="1"/><line x1="2215.45" y1="109" x2="2215.45" y2="112.4" stroke="#8a6d2a" stroke-width="1"/><text x="2163.1" y="162.8" font-size="18.4" fill="#fbfbfb" textLength="67.3" lengthAdjust="spacingAndGlyphs" stroke="#3b4453" stroke-width="0.28">Measure</text><polygon points="2193,173.4 2201,173.4 2197,177.7" fill="#d6d6d6"/><polygon points="2262,91 2268.4,91 2265,95.6 2268.6,95.6 2260.4,103 2262.6,97.4 2259.6,97.4" fill="#fbc94c"/><rect x="2264.6" y="100.4" width="14.6" height="14.8" fill="#f4f4f4"/><path d="M2268.6 104.6 H2270 M2272 104.6 H2277 M2268.6 108 H2270 M2272 108 H2277 M2268.6 111.4 H2270 M2272 111.4 H2277" fill="none" stroke="#2f86e0" stroke-width="1.4"/><polygon points="2254.4,98.4 2254.4,111.16 2257.48,108.52 2259.9,113.58 2262.1,112.48 2259.79,107.64 2263.86,107.42" fill="#f6f6f6" stroke="#3b4453" stroke-width="0.5"/><rect x="2255" y="127.8" width="21" height="21" fill="none" stroke="#4ed07c" stroke-width="1.1" stroke-dasharray="2.4 1.4"/><rect x="2257.4" y="135" width="11.6" height="11.4" fill="#4fbf78"/><rect x="2262" y="130.2" width="12" height="11.8" fill="#7ddc9d"/><polygon points="2269.4,137.6 2269.4,150.13 2272.42,147.54 2274.8,152.5 2276.96,151.42 2274.69,146.67 2278.69,146.46" fill="#f6f6f6" stroke="#3b4453" stroke-width="0.5"/><rect x="2257.8" y="162.8" width="17.4" height="24.2" fill="#cfcfcf"/><rect x="2260.6" y="166" width="11.8" height="4.6" fill="#5a5a5a"/><rect x="2260.6" y="173.4" width="3" height="3" fill="#5a5a5a"/><rect x="2264.9" y="173.4" width="3" height="3" fill="#5a5a5a"/><rect x="2269.2" y="173.4" width="3" height="3" fill="#5a5a5a"/><rect x="2260.6" y="177.6" width="3" height="3" fill="#5a5a5a"/><rect x="2264.9" y="177.6" width="3" height="3" fill="#5a5a5a"/><rect x="2269.2" y="177.6" width="3" height="3" fill="#5a5a5a"/><rect x="2260.6" y="181.8" width="3" height="3" fill="#5a5a5a"/><rect x="2264.9" y="181.8" width="3" height="3" fill="#5a5a5a"/><rect x="2269.2" y="181.8" width="3" height="3" fill="#5a5a5a"/><text x="2177.8" y="220" font-size="18.4" fill="#fbfbfb" textLength="57.4" lengthAdjust="spacingAndGlyphs" stroke="#3b4453" stroke-width="0.28">Utilities</text><polygon points="2244,209.2 2256,209.2 2250,215.4" fill="#d6d6d6"/><rect x="2310.9" y="95" width="33.1" height="37" fill="#dcb077"/><path d="M2319.6 96 V93.6 Q2319.6 92 2321.4 92 H2323.4 Q2324 90 2327.4 90 Q2330.6 90 2331.4 92 H2333.4 Q2335.2 92 2335.2 93.6 V96 Z" fill="#f4f4f4"/><polygon points="2322,105 2340.4,105 2349,113.6 2349,138.3 2322,138.3" fill="#dedede"/><polygon points="2340.4,105 2349,113.6 2340.4,113.6" fill="#f8f8f8"/><text x="2309.4" y="162.8" font-size="18.4" fill="#fbfbfb" textLength="41.1" lengthAdjust="spacingAndGlyphs" stroke="#3b4453" stroke-width="0.28">Paste</text><polygon points="2324.5,173.4 2332.7,173.4 2328.6,177.7" fill="#d6d6d6"/><rect x="2374.7" y="90.8" width="17.9" height="21.2" fill="#d6d6d6"/><path d="M2378 96 H2389 M2378 101 H2389 M2378 106 H2389" fill="none" stroke="#9a9a9a" stroke-width="1.1"/><path d="M2385.6 98.6 L2396.6 110.6 M2399 100 L2388 110.6" fill="none" stroke="#f4f4f4" stroke-width="1.8"/><circle cx="2387.6" cy="112.6" r="2.5" fill="none" stroke="#f4f4f4" stroke-width="1.4"/><circle cx="2396.6" cy="112.6" r="2.5" fill="none" stroke="#f4f4f4" stroke-width="1.4"/><polygon points="2405.8,99.6 2413.7,99.6 2409.75,104" fill="#d6d6d6"/><polygon points="2377.7,127.2 2387.9,127.2 2392.3,131.6 2392.3,146.6 2377.7,146.6" fill="#c4c4c4"/><polygon points="2387.9,127.2 2392.3,131.6 2387.9,131.6" fill="#f8f8f8"/><polygon points="2382,131.4 2392.8,131.4 2397.4,136 2397.4,151.2 2382,151.2" fill="#dedede"/><polygon points="2392.8,131.4 2397.4,136 2392.8,136" fill="#f8f8f8"/><polygon points="2405.8,135.6 2413.7,135.6 2409.75,140" fill="#d6d6d6"/><text x="2317.7" y="219.9" font-size="18.4" fill="#fbfbfb" textLength="78.4" lengthAdjust="spacingAndGlyphs" stroke="#3b4453" stroke-width="0.28">Clipboard</text><polygon points="2448,94.8 2469,94.8 2469,110 2496.2,110 2496.2,131.2 2448,131.2" fill="#dedede"/><text x="2453.9" y="161.7" font-size="18.4" fill="#fbfbfb" textLength="36.7" lengthAdjust="spacingAndGlyphs" stroke="#3b4453" stroke-width="0.28">Base</text><polygon points="2467.8,172.4 2475.8,172.4 2471.8,176.7" fill="#d6d6d6"/><text x="2433.4" y="220" font-size="18.4" fill="#fbfbfb" textLength="37.7" lengthAdjust="spacingAndGlyphs" stroke="#3b4453" stroke-width="0.28">View</text><polygon points="2480.2,209.2 2492,209.2 2486.1,215.4" fill="#d6d6d6"/><path d="M2503.6 209.4 l5.6 5.6" fill="none" stroke="#d0d0d0" stroke-width="1.5"/><polygon points="2511.2,211 2511.2,217 2505.2,217" fill="#d0d0d0"/></svg></div>
<div id="filetabs" class="rg " style="left:0px;top:226px;width:2559px;height:41px;background:#222933;"><svg width="2559" height="41" viewBox="0 226 2559 41"><polygon points="150,231.2 233,231.2 218.3,267 135,267" fill="#3b4453"/><rect x="25.1" y="240.1" width="24.1" height="2.6" fill="#dcdcdc"/><rect x="25.1" y="247.8" width="24.1" height="2.6" fill="#dcdcdc"/><rect x="25.1" y="255.4" width="24.1" height="2.6" fill="#dcdcdc"/><line x1="64.6" y1="260.8" x2="74.6" y2="237.2" stroke="#4a5262" stroke-width="1.3"/><text x="87.8" y="255.7" font-size="18.4" fill="#f8f8f8" textLength="36.8" lengthAdjust="spacingAndGlyphs" stroke="#222933" stroke-width="0.28">Start</text><text x="159.7" y="255.7" font-size="18.4" fill="#fbfbfb" textLength="29.8" lengthAdjust="spacingAndGlyphs" font-weight="bold" stroke="#3b4453" stroke-width="0.28">T0*</text><path d="M204 244.2 L214 254.4 M214 244.2 L204 254.4" fill="none" stroke="#a9b0c0" stroke-width="2.7"/><rect x="246" y="247.7" width="21.9" height="2.8" fill="#dcdcdc"/><rect x="255.5" y="238.5" width="2.9" height="21.2" fill="#dcdcdc"/><line x1="283.2" y1="260.8" x2="293.8" y2="237.2" stroke="#4a5262" stroke-width="1.3"/></svg></div>
<div id="band-top" class="rg " style="left:0px;top:267px;width:2559px;height:6px;background:#3b4453;"><svg width="2559" height="6" viewBox="0 267 2559 6"></svg></div>
<div id="leftdock" class="rg " style="left:0px;top:273px;width:38px;height:1204px;background:#222933;"><svg width="38" height="1204" viewBox="0 273 38 1204"><rect x="0" y="273" width="38" height="2.8" fill="#3b4453"/><rect x="1" y="280" width="33" height="590.5" fill="#3c4555"/><rect x="1" y="879" width="33" height="590.3" fill="#3c4555"/><text transform="translate(26 675.2) rotate(-90)" font-size="18.3" fill="#e8e8e8" style="font-family:'DejaVu Sans','Liberation Sans',sans-serif" textLength="202" lengthAdjust="spacingAndGlyphs">Layer Properties Manager</text><text transform="translate(26 1249.2) rotate(-90)" font-size="18.3" fill="#e8e8e8" style="font-family:'DejaVu Sans','Liberation Sans',sans-serif" textLength="150.6" lengthAdjust="spacingAndGlyphs">External References</text></svg></div>
<div id="viewport" class="rg " style="left:38px;top:273px;width:2521px;height:1204px;background:#212830;"><svg width="2521" height="1204" viewBox="38 273 2521 1204"><text x="42.8" y="297" font-size="18.4" fill="#e6e6e6" textLength="23.8" lengthAdjust="spacingAndGlyphs">[−]</text><text x="68" y="297" font-size="18.4" fill="#e6e6e6" textLength="171.4" lengthAdjust="spacingAndGlyphs">[Custom View][X-Ray]</text><rect x="2472.4" y="292.1" width="16.4" height="6.6" fill="#ececec" stroke="#171b21" stroke-width="1.2"/><rect x="2505.9" y="284.6" width="12.3" height="11.8" fill="#e4e4e4" stroke="#171b21" stroke-width="1.2"/><rect x="2503" y="287" width="12.3" height="13.1" fill="#f2f2f2" stroke="#171b21" stroke-width="1.2"/><rect x="2506.2" y="290.2" width="5.6" height="5.7" fill="#1c2129"/><path d="M2534.4 287.8 L2544.4 296.8 M2544.4 287.8 L2534.4 296.8" fill="none" stroke="#171b21" stroke-width="5.8"/><path d="M2534.4 287.8 L2544.4 296.8 M2544.4 287.8 L2534.4 296.8" fill="none" stroke="#f2f2f2" stroke-width="3.6"/><defs><linearGradient id="cf" x1="0" y1="0" x2="0" y2="1"><stop offset="0" stop-color="#aaadb2"/><stop offset="1" stop-color="#96979a"/></linearGradient><radialGradient id="csh" cx="0.5" cy="0.5" r="0.5"><stop offset="0" stop-color="#3c424c" stop-opacity="0.9"/><stop offset="1" stop-color="#3c424c" stop-opacity="0"/></radialGradient><filter id="bl1" x="-10%" y="-10%" width="120%" height="120%"><feGaussianBlur stdDeviation="0.7"/></filter></defs><path d="M2340.8 469.5 a96.4 58 0 1 0 192.8 0 a96.4 58 0 1 0 -192.8 0 Z M2361.6 464.9 a75.6 41.4 0 1 0 151.2 0 a75.6 41.4 0 1 0 -151.2 0 Z" fill="#454c57" fill-rule="evenodd" filter="url(#bl1)"/><ellipse cx="2446" cy="476" rx="58" ry="26" fill="url(#csh)"/><polygon points="2391.4,387 2411.3,418.4 2412.9,484.6 2394.3,439.4" fill="#9c9fa4"/><polygon points="2391.4,387 2458.1,377.1 2485.9,407.6 2411.3,418.4" fill="#a9adb2"/><polygon points="2411.3,418.4 2485.9,407.6 2482.7,471.1 2412.9,484.6" fill="url(#cf)"/><polygon points="2422.4,410 2469.2,404.4 2471.6,421.9 2426.4,428.3" fill="#a9acbc" opacity="0.85"/><polyline points="2411.3,418.4 2485.9,407.6" fill="none" stroke="#62666f" stroke-width="0.9" stroke-dasharray="6 2"/><polyline points="2391.4,387 2411.3,418.4 2412.9,484.6" fill="none" stroke="#62666f" stroke-width="0.9" stroke-dasharray="7 2"/><text transform="translate(2437 397) rotate(-9) skewX(-8)" text-anchor="middle" font-size="11.6" font-weight="bold" fill="#596070" stroke="#596070" stroke-width="0.3" textLength="30" lengthAdjust="spacingAndGlyphs" y="4">TOP</text><text transform="translate(2448.6 447.4) rotate(-11)" text-anchor="middle" font-size="21" font-weight="bold" fill="#5a6070" stroke="#5a6070" stroke-width="0.7" textLength="51" lengthAdjust="spacingAndGlyphs" y="7.4">FRONT</text><text transform="translate(2403.6 435.6) rotate(62) skewX(20)" text-anchor="middle" font-size="8" font-weight="bold" fill="#596070" textLength="14" lengthAdjust="spacingAndGlyphs" y="3">LEFT</text><text transform="translate(2347.8 480.4) rotate(-14) scale(1.5 1)" text-anchor="middle" font-size="22" font-weight="bold" fill="#a5a8ac" y="7.8">W</text><text transform="translate(2470 518.6) rotate(8) scale(1.45 1)" text-anchor="middle" font-size="22" font-weight="bold" fill="#a5a8ac" y="7.8">S</text><text transform="translate(2517 449) rotate(-17) scale(1.4 1)" text-anchor="middle" font-size="19" font-weight="bold" fill="#a5a8ac" y="6.8">E</text><rect x="2403.6" y="560.1" width="67.8" height="24.2" fill="#9b9dae" rx="4" stroke="#a9abbc" stroke-width="1"/><text x="2409.4" y="576.2" font-size="15.2" fill="#686b79" textLength="35.2" lengthAdjust="spacingAndGlyphs">WCS</text><polygon points="2453,568.4 2464.8,568.4 2458.9,574.8" fill="#a4a6b6" stroke="#b9bbc9" stroke-width="1"/><rect x="2511.1" y="618" width="45.9" height="310.7" fill="#5d6168" rx="3.5" stroke="#3f434a" stroke-width="1"/><circle cx="2548" cy="624.4" r="4.8" fill="#6b6f77" stroke="#54585f" stroke-width="1"/><circle cx="2548" cy="919.4" r="4.8" fill="#6b6f77" stroke="#54585f" stroke-width="1"/><path d="M2545.6 622 l4.8 4.8 m0 -4.8 l-4.8 4.8" fill="none" stroke="#585c63" stroke-width="1.2"/><path d="M2544.6 919.4 h6.8" fill="none" stroke="#585c63" stroke-width="2"/><path d="M2533.8 643 H2548 Q2550 643 2550 645 V659 A16.2 16.2 0 1 1 2533.8 643 Z" fill="none" stroke="#4b4f56" stroke-width="2.2"/><circle cx="2533.8" cy="659" r="9.2" fill="none" stroke="#4b4f56" stroke-width="2.2"/><path d="M2527.4 665.6 L2522.4 670.6 M2540.2 665.6 L2545.2 670.6" fill="none" stroke="#4b4f56" stroke-width="2"/><polygon points="2530.8,687.4 2538.6,687.4 2534.7,691.6" fill="#4b4f56"/><line x1="2514" y1="699.6" x2="2554" y2="699.6" stroke="#676b72" stroke-width="1"/><path d="M2523.4 726 L2518 722.6 Q2516 722.4 2516.4 724.4 L2526 737 Q2528 739.6 2532 739.6 H2540 Q2544.6 739.6 2546 734 L2549.6 720 Q2550 717.6 2548 717.2 Q2546.4 717.2 2545.6 719.6 L2543.6 725 L2544 710.4 Q2543.8 708.4 2542 708.4 Q2540.4 708.4 2540 710.4 L2538.6 723 L2536.6 707.6 Q2536.2 705.6 2534.4 705.8 Q2532.8 706 2532.8 708 L2533.2 723.4 L2529.4 711 Q2528.6 709 2527 709.6 Q2525.6 710.2 2526 712.4 L2529.4 729" fill="none" stroke="#4b4f56" stroke-width="2"/><path d="M2517 749 L2538 770 M2538 749 L2517 770" fill="none" stroke="#4b4f56" stroke-width="2"/><path d="M2516.4 754 V748.4 H2522 M2533 748.4 H2538.6 V754 M2516.4 765 V770.6 H2522" fill="none" stroke="#4b4f56" stroke-width="2.4"/><circle cx="2540.4" cy="772" r="6.6" fill="#5d6168" stroke="#4b4f56" stroke-width="2.2"/><line x1="2545.4" y1="777" x2="2551" y2="782.4" stroke="#4b4f56" stroke-width="3.4"/><polygon points="2530.8,792 2538.6,792 2534.7,796.2" fill="#4b4f56"/><ellipse cx="2533" cy="824" rx="16.4" ry="5.4" fill="none" stroke="#4b4f56" stroke-width="2.2"/><path d="M2530 838 V814 H2526.4 L2533 805.6 L2539.6 814 H2536 V838 Z" fill="#5d6168" stroke="#4b4f56" stroke-width="2"/><polygon points="2516,830 2524.4,824 2524.4,835" fill="#4b4f56"/><polygon points="2530.8,849 2538.6,849 2534.7,853.4" fill="#4b4f56"/><line x1="2514" y1="861.6" x2="2554" y2="861.6" stroke="#676b72" stroke-width="1"/><rect x="2516.6" y="868.8" width="8.6" height="8.4" fill="none" stroke="#4b4f56" stroke-width="1.6"/><rect x="2528.6" y="868.8" width="8.6" height="8.4" fill="none" stroke="#4b4f56" stroke-width="1.6"/><rect x="2540.6" y="868.8" width="8.6" height="8.4" fill="none" stroke="#4b4f56" stroke-width="1.6"/><rect x="2516.6" y="882.4" width="24" height="19" fill="none" stroke="#4b4f56" stroke-width="1.8"/><polygon points="2524,886.4 2524,897.6 2534,892" fill="#4b4f56"/><line x1="1438.6" y1="1166" x2="1438.6" y2="1290" stroke="#7d7df2" stroke-width="1.2"/><line x1="1394" y1="1255.6" x2="1530" y2="1235.3" stroke="#f27474" stroke-width="1.2"/><line x1="1409.1" y1="1204.3" x2="1453.9" y2="1270.7" stroke="#74f274" stroke-width="1.2"/><rect x="1434.6" y="1244.6" width="8" height="8" fill="#212830" stroke="#ffffff" stroke-width="1.2"/></svg></div>
<div id="cmdline" class="rg " style="left:560px;top:1340px;width:1475px;height:138px;"><svg width="1475" height="138" viewBox="560 1340 1475 138"><path d="M567.8 1476.4 V1350 Q567.8 1344.2 573.6 1344.2 H604.4 V1476.4 Z" fill="#2a313d"/><line x1="573.4" y1="1351.4" x2="598.6" y2="1351.4" stroke="#c8c8c8" stroke-width="1.3" stroke-dasharray="1.6 2.2"/><path d="M579 1371.6 L591 1383.6 M591 1371.6 L579 1383.6" fill="none" stroke="#dcdcdc" stroke-width="2.2"/><path d="M575.6 1423.6 L588 1411.2" fill="none" stroke="#d0d0d0" stroke-width="3.4" stroke-linecap="round"/><path d="M593.8 1403.2 A5.4 5.4 0 1 0 596.6 1410.4 L591.4 1409.8 L589.6 1406 Z" fill="#d0d0d0"/><rect x="604.4" y="1344.2" width="1423" height="101" fill="#98999b"/><rect x="604.4" y="1444.8" width="1423" height="1.4" fill="#2e3440"/><rect x="604.4" y="1446.2" width="1423" height="29.1" fill="#bfc0c2"/><text x="608.2" y="1368" font-size="19.6" fill="#15171a" textLength="85.8" lengthAdjust="spacingAndGlyphs" style="font-family:'Liberation Mono',monospace">Command:</text><text x="608.2" y="1391" font-size="19.6" fill="#15171a" textLength="85.8" lengthAdjust="spacingAndGlyphs" style="font-family:'Liberation Mono',monospace">Command:</text><text x="608.2" y="1414.2" font-size="19.6" fill="#15171a" textLength="85.8" lengthAdjust="spacingAndGlyphs" style="font-family:'Liberation Mono',monospace">Command:</text><text x="608.2" y="1437.3" font-size="19.6" fill="#15171a" textLength="85.8" lengthAdjust="spacingAndGlyphs" style="font-family:'Liberation Mono',monospace">Command:</text><rect x="611.3" y="1453.4" width="23" height="16.6" fill="#c9c9cb" stroke="#5a5d63" stroke-width="1.2"/><rect x="611.3" y="1453.4" width="23" height="3.6" fill="#5a5d63"/><path d="M614 1461 l3 2.2 l-3 2.2 M619 1466.4 h5" fill="none" stroke="#5a5d63" stroke-width="1"/><polygon points="638.8,1459.4 649.8,1459.4 644.3,1465" fill="#4c4f55"/><text x="660.2" y="1466.6" font-size="19.6" fill="#5f6166" textLength="152.8" lengthAdjust="spacingAndGlyphs" font-style="italic" style="font-family:'Liberation Mono',monospace">Type a command</text><polygon points="2011.4,1464 2022.6,1464 2017,1458.6" fill="#4c4f55"/></svg></div>
<div id="balloon" class="rg " style="left:2095px;top:1314px;width:464px;height:186px;"><svg width="464" height="186" viewBox="2095 1314 464 186"><path d="M2125.8 1318.8 H2526.6 Q2551.6 1318.8 2551.6 1343.8 V1444.9 Q2551.6 1469.9 2526.6 1469.9 H2445.4 L2452 1497.6 L2417.6 1469.9 H2125.8 Q2100.8 1469.9 2100.8 1444.9 V1343.8 Q2100.8 1318.8 2125.8 1318.8 Z" fill="#ffffe1" stroke="#14171c" stroke-width="1.2"/><defs><radialGradient id="inf" cx="0.4" cy="0.3" r="0.8"><stop offset="0" stop-color="#6f9df0"/><stop offset="0.6" stop-color="#1c4fd0"/><stop offset="1" stop-color="#0b2f9a"/></radialGradient></defs><circle cx="2126.5" cy="1344.8" r="11.2" fill="url(#inf)" stroke="#c9d4ee" stroke-width="1.2"/><text x="2123.2" y="1352.6" font-size="19" fill="#fff" textLength="7" lengthAdjust="spacingAndGlyphs" font-weight="bold" style="font-family:'Liberation Serif',serif">i</text><text x="2154" y="1353.2" font-size="19.2" fill="#000" textLength="185" lengthAdjust="spacingAndGlyphs" font-weight="bold">View Drawing History</text><rect x="2514.8" y="1334.2" width="22.8" height="22.4" fill="#ffffe1" stroke="#7a7a7a" stroke-width="1"/><path d="M2520 1339 L2532.4 1351.8 M2532.4 1339 L2520 1351.8" fill="none" stroke="#000" stroke-width="1.6"/><text x="2121" y="1387" font-size="18.8" fill="#000" textLength="403.4" lengthAdjust="spacingAndGlyphs" stroke="#ffffe1" stroke-width="0.28">You can view and compare previous versions in the</text><text x="2121" y="1411.9" font-size="18.8" fill="#000" textLength="394.6" lengthAdjust="spacingAndGlyphs" stroke="#ffffe1" stroke-width="0.28">Drawing History palette by signing into OneDrive.</text><text x="2121" y="1445.6" font-size="18.8" fill="#0000ee" textLength="155.6" lengthAdjust="spacingAndGlyphs" text-decoration="underline">Sign in to OneDrive</text></svg></div>
<div id="model" class="rg " style="left:780px;top:590px;width:760px;height:520px;"><svg width="760" height="520" viewBox="780 590 760 520"><defs><linearGradient id="mtop" gradientUnits="userSpaceOnUse" x1="900" y1="900" x2="1420" y2="640"><stop offset="0" stop-color="#8e8800"/><stop offset="1" stop-color="#8b8400"/></linearGradient><clipPath id="cw1"><polygon points="958.18,1079.31 1082.17,1059.07 1082.17,893.7 958.18,913.94" fill="#000"/></clipPath><clipPath id="cw2"><polygon points="1097.59,1056.55 1220.24,1036.52 1220.24,871.15 1097.59,891.18" fill="#000"/></clipPath><clipPath id="cw3"><polygon points="1240.58,1033.2 1362.6,1013.28 1362.6,847.91 1240.58,867.83" fill="#000"/></clipPath><clipPath id="cw4"><polygon points="1379,1010.6 1501.66,990.58 1501.66,825.21 1379,845.23" fill="#000"/></clipPath><clipPath id="ctop"><polygon points="940.8,906.2 1520.2,811.6 1381.7,605 802.3,699.6" fill="#000"/></clipPath></defs><polygon points="802.3,699.6 1381.7,605 1520.2,811.6 1520.2,997.2 940.8,1091.8 802.3,885.2" fill="rgb(141,139,0)"/><polygon points="802.3,699.6 1381.7,605 1520.2,811.6 940.8,906.2" fill="rgb(140,136,0)"/><polygon points="889.51,810.18 1432.99,721.44 1370.25,627.85 826.77,716.59" fill="rgb(136,128,0)"/><polygon points="802.3,699.6 1381.7,605 1381.7,615.21 802.3,709.81" fill="rgb(122,92,14)"/><polygon points="1381.7,605 1520.2,811.6 1520.2,821.81 1381.7,615.21" fill="rgb(128,100,12)"/><polygon points="808.81,719.52 1388.21,624.92 1381.7,615.21 802.3,709.81" fill="rgb(153,151,0)"/><polygon points="940.8,916.41 958.76,913.48 820.26,706.88 802.3,709.81" fill="rgb(153,151,0)"/><polygon points="1502.24,824.74 1520.2,821.81 1381.7,615.21 1363.74,618.14" fill="rgb(153,151,0)"/><polygon points="940.8,916.41 1520.2,821.81 1513.69,812.1 934.29,906.7" fill="rgb(153,151,0)"/><polygon points="1158.19,821.16 1212.07,812.36 1212.07,653.68 1158.19,662.47" fill="rgb(134,76,54)"/><polygon points="941.66,889.15 926.43,866.43 926.43,700.31 941.66,723.04" fill="rgb(147,90,58)"/><polygon points="1284.86,831.51 1270.59,810.23 1270.59,644.12 1284.86,665.4" fill="rgba(150,100,50,0.28)"/><polygon points="1257.84,646.2 1271.75,643.93 1286.02,665.21 1272.11,667.48" fill="rgba(150,96,50,0.5)"/><polygon points="1217.5,816.5 1269.8,811.7 1274.6,829.2 1288.9,849.8 1246,859.4 1217.5,819.7" fill="rgba(168,108,0,0.6)"/><polygon points="1217.5,819.7 1246,859.4 1252,872 1236,874 1217.5,846" fill="rgba(170,92,0,0.6)"/><polygon points="889.51,976.29 1001.91,957.93 1001.91,791.82 889.51,810.18" fill="rgba(139,139,0,0.82)"/><polygon points="1321.74,905.72 1432.99,887.55 1432.99,721.44 1321.74,739.6" fill="rgba(139,139,0,0.82)"/><polygon points="1039.75,898.35 1119.71,885.3 1119.71,719.18 1039.75,732.24" fill="rgba(139,139,0,0.82)"/><polygon points="1138.25,882.27 1218.21,869.21 1218.21,703.1 1138.25,716.16" fill="rgba(138,128,18,0.80)"/><polygon points="988.01,960.21 940.5,889.34 940.5,723.23 988.01,794.09" fill="rgba(139,137,0,0.55)"/><polygon points="1321.74,905.72 1273.27,833.41 1273.27,667.29 1321.74,739.6" fill="rgba(139,137,0,0.55)"/><polygon points="1214.72,1027.02 1089.24,839.84 1089.24,673.73 1214.72,860.91" fill="rgba(139,139,0,0.45)"/><polygon points="1216.23,954.04 1241.72,949.88 1163.19,832.74 1137.7,836.9" fill="rgba(150,120,0,0.35)"/><polygon points="1216.23,998.58 1241.72,994.42 1241.72,949.88 1216.23,954.04" fill="rgba(150,110,0,0.35)"/><polygon points="1216.23,861.24 1241.72,857.08 1163.19,739.94 1137.7,744.1" fill="rgba(150,120,0,0.35)"/><polygon points="1216.23,903.93 1241.72,899.77 1241.72,857.08 1216.23,861.24" fill="rgba(150,110,0,0.35)"/><polygon points="984.95,856.87 1038.83,848.07 1038.83,836.01 984.95,849.45" fill="rgba(154,118,6,0.9)"/><polygon points="984.95,849.45 1038.83,836.01 1038.83,681.96 984.95,690.76" fill="rgb(134,76,54)"/><polygon points="984.95,849.45 1001.75,845.78 1001.75,791.77 984.95,794.51" fill="rgba(150,100,40,0.35)"/><polygon points="984.9,855.5 1038.8,847.5 1038.8,893 1001.9,899 984.9,876" fill="rgba(162,116,0,0.7)"/><polygon points="1016.27,960.18 1030.76,957.81 1030.76,791.7 1016.27,794.06" fill="rgba(146,146,0,0.14)"/><polygon points="1016.27,960.18 1011.01,952.32 1011.01,786.21 1016.27,794.06" fill="rgba(138,138,0,0.14)"/><polygon points="1297.28,914.29 1312.35,911.83 1312.35,745.72 1297.28,748.18" fill="rgba(146,146,0,0.14)"/><polygon points="1297.28,914.29 1292.02,906.44 1292.02,740.33 1297.28,748.18" fill="rgba(138,138,0,0.14)"/><polygon points="1172.19,1005.77 1093.66,888.63 1093.66,844.09 1172.19,961.23" fill="rgb(150,92,2)"/><polygon points="1172.19,961.23 1197.68,957.07 1119.16,839.93 1093.66,844.09" fill="rgb(156,98,0)"/><polygon points="1172.19,1005.77 1197.68,1001.61 1197.68,957.07 1172.19,961.23" fill="rgb(144,88,14)"/><polygon points="1172.19,911.12 1093.66,793.98 1093.66,751.29 1172.19,868.43" fill="rgb(150,92,2)"/><polygon points="1172.19,868.43 1197.68,864.27 1119.16,747.13 1093.66,751.29" fill="rgb(156,98,0)"/><polygon points="1172.19,911.12 1197.68,906.96 1197.68,864.27 1172.19,868.43" fill="rgb(144,88,14)"/><polygon points="988.01,794.09 1001.91,791.82 954.41,720.96 940.5,723.23" fill="rgb(153,151,0)"/><polygon points="889.51,810.18 1001.91,791.82 998.18,786.24 885.77,804.6" fill="rgb(153,151,0)"/><polygon points="1039.75,732.24 1119.71,719.18 1117.63,716.08 1037.67,729.14" fill="rgb(153,151,0)"/><polygon points="1214.72,860.91 1233.26,857.88 1107.78,670.7 1089.24,673.73" fill="rgb(153,151,0)"/><polygon points="1320.59,739.79 1334.49,737.52 1286.02,665.21 1272.11,667.48" fill="rgb(153,151,0)"/><polygon points="1320.59,739.79 1432.99,721.44 1429.25,715.86 1316.85,734.21" fill="rgb(153,151,0)"/><polygon points="1138.25,716.16 1218.21,703.1 1216.13,700 1136.17,713.06" fill="rgb(153,151,0)"/><polygon points="1016.27,794.06 1030.76,791.7 1025.5,783.85 1011.01,786.21" fill="rgba(153,151,0,0.22)"/><polygon points="1297.28,748.18 1312.35,745.72 1307.08,737.87 1292.02,740.33" fill="rgba(153,151,0,0.22)"/><g opacity="0.9"><path d="M988.01 960.21 L1001.91 957.93 L954.41 887.07 L940.5 889.34 L988.01 960.21M988.01 794.09 L1001.91 791.82 L954.41 720.96 L940.5 723.23 L988.01 794.09M988.01 960.21 L988.01 794.09M1001.91 957.93 L1001.91 791.82M954.41 887.07 L954.41 720.96M940.5 889.34 L940.5 723.23" fill="none" stroke="rgba(250,236,150,0.42)" stroke-width="1"/><path d="M889.51 976.29 L1001.91 957.93 L998.18 952.36 L885.77 970.71 L889.51 976.29M889.51 810.18 L1001.91 791.82 L998.18 786.24 L885.77 804.6 L889.51 810.18M889.51 976.29 L889.51 810.18M1001.91 957.93 L1001.91 791.82M998.18 952.36 L998.18 786.24M885.77 970.71 L885.77 804.6" fill="none" stroke="rgba(250,236,150,0.42)" stroke-width="1"/><path d="M1039.75 898.35 L1119.71 885.3 L1117.63 882.2 L1037.67 895.25 L1039.75 898.35M1039.75 732.24 L1119.71 719.18 L1117.63 716.08 L1037.67 729.14 L1039.75 732.24M1039.75 898.35 L1039.75 732.24M1119.71 885.3 L1119.71 719.18M1117.63 882.2 L1117.63 716.08M1037.67 895.25 L1037.67 729.14" fill="none" stroke="rgba(250,236,150,0.42)" stroke-width="1"/><path d="M1214.72 1027.02 L1233.26 1024 L1107.78 836.82 L1089.24 839.84 L1214.72 1027.02M1214.72 860.91 L1233.26 857.88 L1107.78 670.7 L1089.24 673.73 L1214.72 860.91M1214.72 1027.02 L1214.72 860.91M1233.26 1024 L1233.26 857.88M1107.78 836.82 L1107.78 670.7M1089.24 839.84 L1089.24 673.73" fill="none" stroke="rgba(250,236,150,0.42)" stroke-width="1"/><path d="M1320.59 905.9 L1334.49 903.63 L1286.02 831.32 L1272.11 833.59 L1320.59 905.9M1320.59 739.79 L1334.49 737.52 L1286.02 665.21 L1272.11 667.48 L1320.59 739.79M1320.59 905.9 L1320.59 739.79M1334.49 903.63 L1334.49 737.52M1286.02 831.32 L1286.02 665.21M1272.11 833.59 L1272.11 667.48" fill="none" stroke="rgba(250,236,150,0.42)" stroke-width="1"/><path d="M1320.59 905.9 L1432.99 887.55 L1429.25 881.97 L1316.85 900.33 L1320.59 905.9M1320.59 739.79 L1432.99 721.44 L1429.25 715.86 L1316.85 734.21 L1320.59 739.79M1320.59 905.9 L1320.59 739.79M1432.99 887.55 L1432.99 721.44M1429.25 881.97 L1429.25 715.86M1316.85 900.33 L1316.85 734.21" fill="none" stroke="rgba(250,236,150,0.42)" stroke-width="1"/><path d="M1138.25 882.27 L1218.21 869.21 L1216.13 866.11 L1136.17 879.17 L1138.25 882.27M1138.25 716.16 L1218.21 703.1 L1216.13 700 L1136.17 713.06 L1138.25 716.16M1138.25 882.27 L1138.25 716.16M1218.21 869.21 L1218.21 703.1M1216.13 866.11 L1216.13 700M1136.17 879.17 L1136.17 713.06" fill="none" stroke="rgba(250,236,150,0.42)" stroke-width="1"/><path d="M1016.27 960.18 L1030.76 957.81 L1025.5 949.96 L1011.01 952.32 L1016.27 960.18M1016.27 794.06 L1030.76 791.7 L1025.5 783.85 L1011.01 786.21 L1016.27 794.06M1016.27 960.18 L1016.27 794.06M1030.76 957.81 L1030.76 791.7M1025.5 949.96 L1025.5 783.85M1011.01 952.32 L1011.01 786.21" fill="none" stroke="rgba(250,236,150,0.42)" stroke-width="1"/><path d="M1297.28 914.29 L1312.35 911.83 L1307.08 903.98 L1292.02 906.44 L1297.28 914.29M1297.28 748.18 L1312.35 745.72 L1307.08 737.87 L1292.02 740.33 L1297.28 748.18M1297.28 914.29 L1297.28 748.18M1312.35 911.83 L1312.35 745.72M1307.08 903.98 L1307.08 737.87M1292.02 906.44 L1292.02 740.33" fill="none" stroke="rgba(250,236,150,0.42)" stroke-width="1"/><path d="M1172.19 1005.77 L1197.68 1001.61 L1119.16 884.47 L1093.66 888.63 L1172.19 1005.77M1172.19 961.23 L1197.68 957.07 L1119.16 839.93 L1093.66 844.09 L1172.19 961.23M1172.19 1005.77 L1172.19 961.23M1197.68 1001.61 L1197.68 957.07M1119.16 884.47 L1119.16 839.93M1093.66 888.63 L1093.66 844.09" fill="none" stroke="rgba(250,236,150,0.42)" stroke-width="1"/><path d="M1172.19 911.12 L1197.68 906.96 L1119.16 789.81 L1093.66 793.98 L1172.19 911.12M1172.19 868.43 L1197.68 864.27 L1119.16 747.13 L1093.66 751.29 L1172.19 868.43M1172.19 911.12 L1172.19 868.43M1197.68 906.96 L1197.68 864.27M1119.16 789.81 L1119.16 747.13M1093.66 793.98 L1093.66 751.29" fill="none" stroke="rgba(250,236,150,0.42)" stroke-width="1"/><path d="M1216.23 998.58 L1241.72 994.42 L1163.19 877.28 L1137.7 881.44 L1216.23 998.58M1216.23 954.04 L1241.72 949.88 L1163.19 832.74 L1137.7 836.9 L1216.23 954.04M1216.23 998.58 L1216.23 954.04M1241.72 994.42 L1241.72 949.88M1163.19 877.28 L1163.19 832.74M1137.7 881.44 L1137.7 836.9" fill="none" stroke="rgba(250,236,150,0.42)" stroke-width="1"/><path d="M1216.23 903.93 L1241.72 899.77 L1163.19 782.62 L1137.7 786.79 L1216.23 903.93M1216.23 861.24 L1241.72 857.08 L1163.19 739.94 L1137.7 744.1 L1216.23 861.24M1216.23 903.93 L1216.23 861.24M1241.72 899.77 L1241.72 857.08M1163.19 782.62 L1163.19 739.94M1137.7 786.79 L1137.7 744.1" fill="none" stroke="rgba(250,236,150,0.42)" stroke-width="1"/><path d="M984.95 856.87 L1038.83 848.07 L1032.32 838.36 L978.44 847.16 L984.95 856.87M984.95 690.76 L1038.83 681.96 L1032.32 672.25 L978.44 681.05 L984.95 690.76M984.95 856.87 L984.95 690.76M1038.83 848.07 L1038.83 681.96M1032.32 838.36 L1032.32 672.25M978.44 847.16 L978.44 681.05" fill="none" stroke="rgba(250,236,150,0.42)" stroke-width="1"/><path d="M1158.19 828.59 L1212.07 819.79 L1205.56 810.08 L1151.68 818.88 L1158.19 828.59M1158.19 662.47 L1212.07 653.68 L1205.56 643.97 L1151.68 652.76 L1158.19 662.47M1158.19 828.59 L1158.19 662.47M1212.07 819.79 L1212.07 653.68M1205.56 810.08 L1205.56 643.97M1151.68 818.88 L1151.68 652.76" fill="none" stroke="rgba(250,236,150,0.42)" stroke-width="1"/><path d="M940.5 889.34 L954.41 887.07 L939.17 864.35 L925.27 866.62 L940.5 889.34M940.5 723.23 L954.41 720.96 L939.17 698.23 L925.27 700.5 L940.5 723.23M940.5 889.34 L940.5 723.23M954.41 887.07 L954.41 720.96M939.17 864.35 L939.17 698.23M925.27 866.62 L925.27 700.5" fill="none" stroke="rgba(250,236,150,0.42)" stroke-width="1"/><path d="M1272.11 833.59 L1286.02 831.32 L1271.75 810.04 L1257.84 812.32 L1272.11 833.59M1272.11 667.48 L1286.02 665.21 L1271.75 643.93 L1257.84 646.2 L1272.11 667.48M1272.11 833.59 L1272.11 667.48M1286.02 831.32 L1286.02 665.21M1271.75 810.04 L1271.75 643.93M1257.84 812.32 L1257.84 646.2" fill="none" stroke="rgba(250,236,150,0.42)" stroke-width="1"/><path d="M952.25 1069.88 L1495.73 981.14 L1370.25 793.96 L826.77 882.7 L952.25 1069.88M952.25 903.77 L1495.73 815.03 L1370.25 627.85 L826.77 716.59 L952.25 903.77M952.25 1069.88 L952.25 903.77M1495.73 981.14 L1495.73 815.03M1370.25 793.96 L1370.25 627.85M826.77 882.7 L826.77 716.59" fill="none" stroke="rgba(250,236,150,0.42)" stroke-width="1"/></g><polygon points="802.3,699.6 940.8,906.2 940.8,1091.8 802.3,885.2" fill="rgba(141,139,0,0.80)"/><polygon points="802.3,699.6 826.77,716.59 826.77,882.7 802.3,875.92" fill="rgb(116,118,16)"/><path d="M889.51 976.29 L1001.91 957.93 L998.18 952.36 L885.77 970.71 L889.51 976.29M889.51 810.18 L1001.91 791.82 L998.18 786.24 L885.77 804.6 L889.51 810.18M889.51 976.29 L889.51 810.18M1001.91 957.93 L1001.91 791.82M998.18 952.36 L998.18 786.24M885.77 970.71 L885.77 804.6" fill="none" stroke="rgba(255,246,170,0.35)" stroke-width="1"/><path d="M885.77 970.71 L984.27 954.63 L925.27 866.62 L826.77 882.7 L885.77 970.71M885.77 804.6 L984.27 788.52 L925.27 700.5 L826.77 716.59 L885.77 804.6M885.77 970.71 L885.77 804.6M984.27 954.63 L984.27 788.52M925.27 866.62 L925.27 700.5M826.77 882.7 L826.77 716.59" fill="none" stroke="rgba(255,246,170,0.35)" stroke-width="1"/><polyline points="802.3,709.81 940.8,916.41" fill="none" stroke="#ffffee" stroke-width="1.1"/><polyline points="826.77,716.59 952.25,903.77" fill="none" stroke="rgba(255,250,200,0.8)" stroke-width="1"/><polygon points="940.8,1091.8 1520.2,997.2 1520.2,821.81 940.8,916.41" fill="rgb(141,141,0)"/><polygon points="1501.66,990.95 1520.2,987.92 1520.2,821.81 1501.66,824.84" fill="rgb(116,119,18)"/><polygon points="940.8,906.2 1520.2,811.6 1520.2,821.81 940.8,916.41" fill="rgba(152,150,0,0.62)"/><polygon points="958.18,1079.31 1082.17,1059.07 1082.17,893.7 958.18,913.94" fill="rgb(98,100,74)"/><g clip-path="url(#cw1)"><polygon points="755.67,998.14 1001.91,957.93 1001.91,791.82 755.67,832.03" fill="rgb(126,130,32)"/><polygon points="988.01,960.21 940.5,889.34 940.5,723.23 988.01,794.09" fill="rgb(134,138,24)"/><polygon points="1016.27,960.18 1030.76,957.81 1030.76,791.7 1016.27,794.06" fill="rgb(126,130,32)"/><polygon points="1016.27,960.18 1011.01,952.32 1011.01,786.21 1016.27,794.06" fill="rgb(134,138,24)"/><path d="M1016.27 960.18 L1030.76 957.81 L1025.5 949.96 L1011.01 952.32 L1016.27 960.18M1016.27 794.06 L1030.76 791.7 L1025.5 783.85 L1011.01 786.21 L1016.27 794.06M1016.27 960.18 L1016.27 794.06M1030.76 957.81 L1030.76 791.7M1025.5 949.96 L1025.5 783.85M1011.01 952.32 L1011.01 786.21" fill="none" stroke="rgba(190,215,235,0.8)" stroke-width="1"/><path d="M988.01 960.21 L1001.91 957.93 L954.41 887.07 L940.5 889.34 L988.01 960.21M988.01 794.09 L1001.91 791.82 L954.41 720.96 L940.5 723.23 L988.01 794.09M988.01 960.21 L988.01 794.09M1001.91 957.93 L1001.91 791.82M954.41 887.07 L954.41 720.96M940.5 889.34 L940.5 723.23" fill="none" stroke="rgba(190,215,235,0.6)" stroke-width="1"/><path d="M889.51 976.29 L1001.91 957.93 L998.18 952.36 L885.77 970.71 L889.51 976.29M889.51 810.18 L1001.91 791.82 L998.18 786.24 L885.77 804.6 L889.51 810.18M889.51 976.29 L889.51 810.18M1001.91 957.93 L1001.91 791.82M998.18 952.36 L998.18 786.24M885.77 970.71 L885.77 804.6" fill="none" stroke="rgba(190,215,235,0.6)" stroke-width="1"/></g><polygon points="958.18,1079.31 1082.17,1059.07 1082.17,893.7 958.18,913.94" fill="none" stroke="#ffffff" stroke-width="1.2"/><polygon points="962.93,1072.97 1077.42,1054.27 1077.42,898.18 962.93,916.88" fill="none" stroke="#ffffff" stroke-width="1.2"/><polygon points="960.62,1076.69 1079.74,1057.24 1079.74,895.95 960.62,915.4" fill="none" stroke="rgba(205,210,205,0.9)" stroke-width="1.3"/><polyline points="959.34,1075.97 1081.01,1056.1" fill="none" stroke="#ffffff" stroke-width="3.6"/><polyline points="959.34,915.79 1081.01,895.93" fill="none" stroke="#ffffff" stroke-width="2.4"/><polygon points="1097.59,1056.55 1220.24,1036.52 1220.24,871.15 1097.59,891.18" fill="rgb(98,100,74)"/><g clip-path="url(#cw2)"><polygon points="1172.19,1005.77 1093.66,888.63 1093.66,844.09 1172.19,961.23" fill="rgb(139,84,26)"/><polygon points="1172.19,961.23 1197.68,957.07 1119.16,839.93 1093.66,844.09" fill="rgb(152,96,4)"/><polygon points="1172.19,1005.77 1197.68,1001.61 1197.68,957.07 1172.19,961.23" fill="rgb(140,86,22)"/><path d="M1172.19 1005.77 L1197.68 1001.61 L1119.16 884.47 L1093.66 888.63 L1172.19 1005.77M1172.19 961.23 L1197.68 957.07 L1119.16 839.93 L1093.66 844.09 L1172.19 961.23M1172.19 1005.77 L1172.19 961.23M1197.68 1001.61 L1197.68 957.07M1119.16 884.47 L1119.16 839.93M1093.66 888.63 L1093.66 844.09" fill="none" stroke="rgba(190,215,235,0.8)" stroke-width="1"/><polygon points="1172.19,911.12 1093.66,793.98 1093.66,751.29 1172.19,868.43" fill="rgb(139,84,26)"/><polygon points="1172.19,868.43 1197.68,864.27 1119.16,747.13 1093.66,751.29" fill="rgb(152,96,4)"/><polygon points="1172.19,911.12 1197.68,906.96 1197.68,864.27 1172.19,868.43" fill="rgb(140,86,22)"/><path d="M1172.19 911.12 L1197.68 906.96 L1119.16 789.81 L1093.66 793.98 L1172.19 911.12M1172.19 868.43 L1197.68 864.27 L1119.16 747.13 L1093.66 751.29 L1172.19 868.43M1172.19 911.12 L1172.19 868.43M1197.68 906.96 L1197.68 864.27M1119.16 789.81 L1119.16 747.13M1093.66 793.98 L1093.66 751.29" fill="none" stroke="rgba(190,215,235,0.8)" stroke-width="1"/><polygon points="1214.72,1027.02 1089.24,839.84 1089.24,673.73 1214.72,860.91" fill="rgba(126,130,32,0.0)"/></g><polygon points="1097.59,1056.55 1220.24,1036.52 1220.24,871.15 1097.59,891.18" fill="none" stroke="#ffffff" stroke-width="1.2"/><polygon points="1102.34,1050.21 1215.49,1031.73 1215.49,875.64 1102.34,894.12" fill="none" stroke="#ffffff" stroke-width="1.2"/><polygon points="1100.02,1053.93 1217.81,1034.69 1217.81,873.41 1100.02,892.64" fill="none" stroke="rgba(205,210,205,0.9)" stroke-width="1.3"/><polyline points="1098.74,1053.21 1219.09,1033.56" fill="none" stroke="#ffffff" stroke-width="3.6"/><polyline points="1098.74,893.03 1219.09,873.38" fill="none" stroke="#ffffff" stroke-width="2.4"/><polygon points="1240.58,1033.2 1362.6,1013.28 1362.6,847.91 1240.58,867.83" fill="rgb(98,100,74)"/><g clip-path="url(#cw3)"><polygon points="1320.59,905.9 1566.83,865.7 1566.83,699.59 1320.59,739.79" fill="rgb(126,130,32)"/><polygon points="1320.59,905.9 1272.11,833.59 1272.11,667.48 1320.59,739.79" fill="rgb(134,138,24)"/><polygon points="1297.28,914.29 1312.35,911.83 1312.35,745.72 1297.28,748.18" fill="rgb(126,130,32)"/><polygon points="1297.28,914.29 1292.02,906.44 1292.02,740.33 1297.28,748.18" fill="rgb(134,138,24)"/><path d="M1297.28 914.29 L1312.35 911.83 L1307.08 903.98 L1292.02 906.44 L1297.28 914.29M1297.28 748.18 L1312.35 745.72 L1307.08 737.87 L1292.02 740.33 L1297.28 748.18M1297.28 914.29 L1297.28 748.18M1312.35 911.83 L1312.35 745.72M1307.08 903.98 L1307.08 737.87M1292.02 906.44 L1292.02 740.33" fill="none" stroke="rgba(190,215,235,0.8)" stroke-width="1"/><path d="M1320.59 905.9 L1334.49 903.63 L1286.02 831.32 L1272.11 833.59 L1320.59 905.9M1320.59 739.79 L1334.49 737.52 L1286.02 665.21 L1272.11 667.48 L1320.59 739.79M1320.59 905.9 L1320.59 739.79M1334.49 903.63 L1334.49 737.52M1286.02 831.32 L1286.02 665.21M1272.11 833.59 L1272.11 667.48" fill="none" stroke="rgba(190,215,235,0.6)" stroke-width="1"/><polygon points="1216.23,998.58 1241.72,994.42 1241.72,949.88 1216.23,954.04" fill="rgb(140,86,22)"/><path d="M1216.23 998.58 L1241.72 994.42 L1163.19 877.28 L1137.7 881.44 L1216.23 998.58M1216.23 954.04 L1241.72 949.88 L1163.19 832.74 L1137.7 836.9 L1216.23 954.04M1216.23 998.58 L1216.23 954.04M1241.72 994.42 L1241.72 949.88M1163.19 877.28 L1163.19 832.74M1137.7 881.44 L1137.7 836.9" fill="none" stroke="rgba(190,215,235,0.6)" stroke-width="1"/><polygon points="1216.23,903.93 1241.72,899.77 1241.72,857.08 1216.23,861.24" fill="rgb(140,86,22)"/><path d="M1216.23 903.93 L1241.72 899.77 L1163.19 782.62 L1137.7 786.79 L1216.23 903.93M1216.23 861.24 L1241.72 857.08 L1163.19 739.94 L1137.7 744.1 L1216.23 861.24M1216.23 903.93 L1216.23 861.24M1241.72 899.77 L1241.72 857.08M1163.19 782.62 L1163.19 739.94M1137.7 786.79 L1137.7 744.1" fill="none" stroke="rgba(190,215,235,0.6)" stroke-width="1"/></g><polygon points="1240.58,1033.2 1362.6,1013.28 1362.6,847.91 1240.58,867.83" fill="none" stroke="#ffffff" stroke-width="1.2"/><polygon points="1245.33,1026.86 1357.85,1008.49 1357.85,852.4 1245.33,870.77" fill="none" stroke="#ffffff" stroke-width="1.2"/><polygon points="1243.02,1030.58 1360.17,1011.45 1360.17,850.16 1243.02,869.29" fill="none" stroke="rgba(205,210,205,0.9)" stroke-width="1.3"/><polyline points="1241.74,1029.86 1361.44,1010.31" fill="none" stroke="#ffffff" stroke-width="3.6"/><polyline points="1241.74,869.69 1361.44,850.14" fill="none" stroke="#ffffff" stroke-width="2.4"/><polygon points="1379,1010.6 1501.66,990.58 1501.66,825.21 1379,845.23" fill="rgb(98,100,74)"/><g clip-path="url(#cw4)"><polygon points="1219.19,922.46 1432.99,887.55 1432.99,721.44 1219.19,756.35" fill="rgb(126,130,32)"/><polygon points="1495.73,981.14 1432.99,887.55 1432.99,721.44 1495.73,815.03" fill="rgb(134,138,24)"/><polyline points="1219.19,922.46 1432.99,887.55 1502.24,990.85" fill="none" stroke="rgba(190,215,235,0.8)" stroke-width="1"/><polyline points="1432.99,887.55 1432.99,721.44" fill="none" stroke="rgba(190,215,235,0.5)" stroke-width="1"/></g><polygon points="1379,1010.6 1501.66,990.58 1501.66,825.21 1379,845.23" fill="none" stroke="#ffffff" stroke-width="1.2"/><polygon points="1383.75,1004.26 1496.91,985.78 1496.91,829.69 1383.75,848.17" fill="none" stroke="#ffffff" stroke-width="1.2"/><polygon points="1381.43,1007.98 1499.23,988.75 1499.23,827.46 1381.43,846.69" fill="none" stroke="rgba(205,210,205,0.9)" stroke-width="1.3"/><polyline points="1380.16,1007.26 1500.5,987.61" fill="none" stroke="#ffffff" stroke-width="3.6"/><polyline points="1380.16,847.09 1500.5,827.44" fill="none" stroke="#ffffff" stroke-width="2.4"/><polygon points="940.8,1091.8 1520.2,997.2 1520.2,987.92 940.8,1082.52" fill="rgb(122,92,14)"/><polygon points="802.3,885.2 940.8,1091.8 940.8,1082.52 802.3,875.92" fill="rgb(126,100,10)"/><polygon points="802.3,699.6 1381.7,605 1520.2,811.6 1520.2,997.2 940.8,1091.8 802.3,885.2" fill="none" stroke="#fffff0" stroke-width="1.3" stroke-linejoin="round"/><polyline points="802.3,699.6 940.8,906.2 1520.2,811.6" fill="none" stroke="#fffff0" stroke-width="1.2"/><polyline points="940.8,906.2 940.8,1091.8" fill="none" stroke="#fffff0" stroke-width="1.2"/><polyline points="940.8,916.41 1520.2,821.81" fill="none" stroke="rgba(255,255,230,0.85)" stroke-width="1"/><polyline points="940.8,1082.52 1520.2,987.92" fill="none" stroke="rgba(255,255,230,0.85)" stroke-width="1"/><polyline points="802.3,875.92 940.8,1082.52" fill="none" stroke="rgba(255,255,230,0.85)" stroke-width="1"/><polyline points="802.3,709.81 1381.7,615.21 1520.2,821.81" fill="none" stroke="rgba(255,250,190,0.6)" stroke-width="1"/><defs><linearGradient id="uz" x1="0" y1="0" x2="1" y2="0"><stop offset="0" stop-color="#3a5f98"/><stop offset="0.45" stop-color="#5a86c4"/><stop offset="1" stop-color="#2f4f84"/></linearGradient><linearGradient id="ux" x1="0" y1="0" x2="0" y2="1"><stop offset="0" stop-color="#cf6b6b"/><stop offset="1" stop-color="#a84848"/></linearGradient><linearGradient id="uy" x1="0" y1="0" x2="1" y2="0"><stop offset="0" stop-color="#2f8a2f"/><stop offset="1" stop-color="#55b055"/></linearGradient></defs><polyline points="919.4,1049 938,1078" fill="none" stroke="url(#uy)" stroke-width="7.4" stroke-linecap="round"/><polyline points="946,1080 1008.6,1069.8" fill="none" stroke="#bf5c5c" stroke-width="7.6" stroke-linecap="round"/><polyline points="946,1078.6 1008.6,1068.4" fill="none" stroke="#d27878" stroke-width="2.4" stroke-linecap="round"/><rect x="936.2" y="1018.6" width="8.6" height="64.6" fill="url(#uz)" rx="3.6"/><ellipse cx="940.5" cy="1019.4" rx="4.3" ry="2" fill="#7aa6e0"/><path d="M937 994.6 H955.6 L937 1012.6 H955.6" fill="none" stroke="#2d7be0" stroke-width="1.4"/><path d="M913.4 1023.6 L921.6 1032.4 L930.6 1024.2 M921.6 1032.4 V1041" fill="none" stroke="#3bb23b" stroke-width="1.3"/><path d="M1005 1045.2 L1022.8 1063.4 M1022.8 1045.2 L1005 1063.4" fill="none" stroke="#e04848" stroke-width="1.3"/></svg></div>
<div id="band-bottom" class="rg " style="left:0px;top:1478px;width:2559px;height:6px;background:#3b4453;"><svg width="2559" height="6" viewBox="0 1478 2559 6"></svg></div>
<div id="statusbar" class="rg " style="left:0px;top:1484px;width:2559px;height:44px;background:#222933;"><svg width="2559" height="44" viewBox="0 1484 2559 44"><rect x="25" y="1493.9" width="24.4" height="2.6" fill="#dcdcdc"/><rect x="25" y="1501.9" width="24.4" height="2.6" fill="#dcdcdc"/><rect x="25" y="1510" width="24.4" height="2.6" fill="#dcdcdc"/><polygon points="78.6,1484 168,1484 153,1520 63.4,1520" fill="#3b4453"/><text x="87.6" y="1510.2" font-size="18.4" fill="#fbfbfb" textLength="54.6" lengthAdjust="spacingAndGlyphs" font-weight="bold" stroke="#3b4453" stroke-width="0.28">Model</text><text x="178" y="1510.2" font-size="18.4" fill="#f6f6f6" textLength="62.6" lengthAdjust="spacingAndGlyphs" stroke="#222933" stroke-width="0.28">Layout1</text><line x1="254.6" y1="1514" x2="264.8" y2="1490.6" stroke="#4a5262" stroke-width="1.3"/><text x="276.8" y="1510.2" font-size="18.4" fill="#f6f6f6" textLength="63.2" lengthAdjust="spacingAndGlyphs" stroke="#222933" stroke-width="0.28">Layout2</text><line x1="353.6" y1="1514" x2="364" y2="1490.6" stroke="#4a5262" stroke-width="1.3"/><rect x="380.2" y="1501.6" width="21.6" height="2.8" fill="#dcdcdc"/><rect x="389.6" y="1492.2" width="2.8" height="21.6" fill="#dcdcdc"/><line x1="417.6" y1="1514" x2="428" y2="1490.6" stroke="#4a5262" stroke-width="1.3"/><rect x="1647.2" y="1488.2" width="71.8" height="35.4" fill="#3b4453"/><rect x="1725" y="1488.2" width="96" height="35.4" fill="#3b4453"/><rect x="1827" y="1488.2" width="155.9" height="35.4" fill="#3b4453"/><rect x="1985.7" y="1488.2" width="95.1" height="35.4" fill="#3b4453"/><rect x="2087.6" y="1488.2" width="157.4" height="35.4" fill="#3b4453"/><rect x="2250.7" y="1488.2" width="60" height="35.4" fill="#3b4453"/><rect x="2313.3" y="1488.2" width="35.7" height="35.4" fill="#3b4453"/><rect x="2355.2" y="1488.2" width="35.8" height="35.4" fill="#3b4453"/><rect x="2394.9" y="1488.2" width="83.7" height="35.4" fill="#3b4453"/><rect x="2483" y="1488.2" width="34.6" height="35.4" fill="#3b4453"/><rect x="2522" y="1488.2" width="37" height="35.4" fill="#3b4453"/><rect x="1864.4" y="1489" width="33.6" height="33.8" fill="#5f8fc4"/><rect x="1985.7" y="1489" width="34.3" height="33.8" fill="#5f8fc4"/><rect x="2022.2" y="1489" width="33.7" height="33.8" fill="#5f8fc4"/><rect x="2087.6" y="1489" width="34.4" height="33.8" fill="#5f8fc4"/><text x="1652.4" y="1512.2" font-size="18.6" fill="#f6f6f6" textLength="62" lengthAdjust="spacingAndGlyphs">MODEL</text><line x1="1736" y1="1494.3" x2="1736" y2="1516.6" stroke="#dcdcdc" stroke-width="1.3"/><line x1="1742.7" y1="1494.3" x2="1742.7" y2="1516.6" stroke="#dcdcdc" stroke-width="1.3"/><line x1="1749.3" y1="1494.3" x2="1749.3" y2="1516.6" stroke="#dcdcdc" stroke-width="1.3"/><line x1="1730.9" y1="1500.4" x2="1754.1" y2="1500.4" stroke="#dcdcdc" stroke-width="1.3"/><line x1="1730.9" y1="1506.1" x2="1754.1" y2="1506.1" stroke="#dcdcdc" stroke-width="1.3"/><line x1="1730.9" y1="1512.2" x2="1754.1" y2="1512.2" stroke="#dcdcdc" stroke-width="1.3"/><rect x="1769.7" y="1497" width="3" height="3" fill="#dcdcdc"/><rect x="1769.7" y="1504.1" width="3" height="3" fill="#dcdcdc"/><rect x="1769.7" y="1511.1" width="3" height="3" fill="#dcdcdc"/><rect x="1776.9" y="1497" width="3" height="3" fill="#dcdcdc"/><rect x="1776.9" y="1504.1" width="3" height="3" fill="#dcdcdc"/><rect x="1776.9" y="1511.1" width="3" height="3" fill="#dcdcdc"/><rect x="1784" y="1497" width="3" height="3" fill="#dcdcdc"/><rect x="1784" y="1504.1" width="3" height="3" fill="#dcdcdc"/><rect x="1784" y="1511.1" width="3" height="3" fill="#dcdcdc"/><polygon points="1803.2,1503.3 1815,1503.3 1809.1,1509.4" fill="#d6d6d6"/><path d="M1833.6 1493.8 V1517.4 H1856.8 M1833.6 1511.4 H1839.8 V1517.4" fill="none" stroke="#dcdcdc" stroke-width="1.3"/><circle cx="1878.7" cy="1506.1" r="9.1" fill="none" stroke="#ffffff" stroke-width="1.4"/><path d="M1892.8 1506.1 H1878.7 L1889.4 1496.4" fill="none" stroke="#ffffff" stroke-width="1.3"/><polygon points="1905.3,1503.3 1917,1503.3 1911.15,1509.4" fill="#d6d6d6"/><line x1="1941.4" y1="1493.8" x2="1941.4" y2="1516" stroke="#5fd47a" stroke-width="1.4"/><line x1="1932" y1="1496.2" x2="1950" y2="1514.2" stroke="#e8636b" stroke-width="1.4"/><rect x="1939.6" y="1503.3" width="3.6" height="3.6" fill="#3b4453" stroke="#f4f4f4" stroke-width="1"/><polygon points="1965.2,1503.3 1977,1503.3 1971.1,1509.4" fill="#d6d6d6"/><path d="M2010.4 1497.6 L1990.8 1514.7 H2014.6" fill="none" stroke="#ffffff" stroke-width="1.4"/><rect x="1997.8" y="1503.6" width="4.6" height="4.6" fill="#ffffff"/><rect x="2030.2" y="1497.6" width="20.6" height="19.8" fill="none" stroke="#ffffff" stroke-width="1.3"/><rect x="2027.2" y="1494.6" width="5.6" height="5.6" fill="#5f8fc4" stroke="#ffffff" stroke-width="1.1"/><polygon points="2063.1,1503.3 2075,1503.3 2069.05,1509.4" fill="#d6d6d6"/><polygon points="2103.8,1493.9 2107.2,1504.2 2106.5,1505.7 2108.5,1507.5 2114.3,1517.7 2106.7,1513.6 2103.8,1512.4 2100.9,1513.6 2093.3,1517.7 2099.1,1507.5 2101.1,1505.7 2100.4,1504.2" fill="#ffffff"/><circle cx="2112.6" cy="1499.6" r="4" fill="none" stroke="#ffffff" stroke-width="1.3"/><polygon points="2139.6,1493.9 2143,1504.2 2142.3,1505.7 2144.3,1507.5 2150.1,1517.7 2142.5,1513.6 2139.6,1512.4 2136.7,1513.6 2129.1,1517.7 2134.9,1507.5 2136.9,1505.7 2136.2,1504.2" fill="#dcdcdc"/><polygon points="2148.6,1495.4 2151.4,1494 2149.8,1498.4 2152,1497.6 2146.2,1505.4 2147.6,1500.6 2145.4,1501.4" fill="#dcdcdc"/><polygon points="2176.4,1493.9 2179.8,1504.2 2179.1,1505.7 2181.1,1507.5 2186.9,1517.7 2179.3,1513.6 2176.4,1512.4 2173.5,1513.6 2165.9,1517.7 2171.7,1507.5 2173.7,1505.7 2173,1504.2" fill="#dcdcdc"/><text x="2202.6" y="1512.6" font-size="18.2" fill="#f4f4f4" textLength="18.4" lengthAdjust="spacingAndGlyphs" font-weight="bold">1:1</text><polygon points="2227.5,1502.7 2238.4,1502.7 2232.95,1508.6" fill="#d6d6d6"/><polygon points="2281.25,1503.14 2281.25,1508.06 2277.81,1508.49 2277.3,1509.72 2279.44,1512.45 2275.95,1515.94 2273.22,1513.8 2271.99,1514.31 2271.56,1517.75 2266.64,1517.75 2266.21,1514.31 2264.98,1513.8 2262.25,1515.94 2258.76,1512.45 2260.9,1509.72 2260.39,1508.49 2256.95,1508.06 2256.95,1503.14 2260.39,1502.71 2260.9,1501.48 2258.76,1498.75 2262.25,1495.26 2264.98,1497.4 2266.21,1496.89 2266.64,1493.45 2271.56,1493.45 2271.99,1496.89 2273.22,1497.4 2275.95,1495.26 2279.44,1498.75 2277.3,1501.48 2277.81,1502.71" fill="#dcdcdc"/><circle cx="2269.1" cy="1505.6" r="4.46" fill="#3b4453"/><polygon points="2293.5,1502.7 2304.8,1502.7 2299.15,1508.6" fill="#d6d6d6"/><rect x="2319.6" y="1503.9" width="22.2" height="3.4" fill="#dcdcdc"/><rect x="2329" y="1494.2" width="3.4" height="22.9" fill="#dcdcdc"/><rect x="2361.6" y="1495.2" width="8.8" height="8.8" fill="none" stroke="#dcdcdc" stroke-width="1.1"/><circle cx="2379.4" cy="1504.8" r="5" fill="none" stroke="#dcdcdc" stroke-width="1.1"/><polygon points="2365.4,1517.4 2376,1517.4 2370.6,1508.8" fill="none" stroke="#dcdcdc" stroke-width="1.1"/><polygon points="2398.8,1488.4 2421,1488.4 2428.6,1495 2428.6,1511 2398.8,1511" fill="#3d6fb2"/><polygon points="2421,1488.4 2428.6,1495 2421,1495" fill="#7ea9dc"/><path d="M2406.8 1488.6 V1509 M2399 1496 H2422" fill="none" stroke="#a8c8ee" stroke-width="1.1"/><circle cx="2406.8" cy="1496" r="2.4" fill="#3d6fb2" stroke="#dce9f8" stroke-width="1.1"/><polygon points="2398.8,1509.4 2419,1509.4 2414,1514 2419,1519.2 2398.8,1519.2" fill="#f5b81c"/><path d="M2414.6 1513.4 L2421.4 1520.6 L2433.8 1508.6" fill="none" stroke="#3fae49" stroke-width="3.8"/><path d="M2449 1499.6 A9.6 9.6 0 1 1 2466 1510.6" fill="none" stroke="#c8c8c8" stroke-width="1.2"/><path d="M2458.6 1497.4 V1504.4 H2463.6" fill="none" stroke="#c8c8c8" stroke-width="1.2"/><polygon points="2446,1497.4 2451.4,1500 2446.4,1503.2" fill="#c8c8c8"/><polygon points="2445.4,1504.4 2452.4,1504.4 2456.8,1508.6 2456.8,1517.6 2445.4,1517.6" fill="#3d6fb2" stroke="#e8e8e8" stroke-width="0.8"/><polygon points="2445.8,1514 2454.4,1513 2456.4,1517.2 2445.8,1517.2" fill="#f5b81c"/><circle cx="2463.4" cy="1512.8" r="5.2" fill="#58b2f4"/><text x="2461.8" y="1516.2" font-size="9" fill="#fff" font-weight="bold">i</text><rect x="2489.8" y="1497.8" width="22.8" height="15.8" fill="none" stroke="#dcdcdc" stroke-width="1.2"/><path d="M2503.2 1504.6 L2508.6 1500.4 M2498.6 1507.2 L2493.6 1511" fill="none" stroke="#dcdcdc" stroke-width="1.2"/><polygon points="2509.8,1499.6 2509.4,1503.6 2505.4,1499.8" fill="#dcdcdc"/><polygon points="2492.2,1512 2492.8,1508 2496.6,1511.6" fill="#dcdcdc"/><rect x="2527.9" y="1495.7" width="24" height="3" fill="#dcdcdc"/><rect x="2527.9" y="1504.6" width="24" height="3" fill="#dcdcdc"/><rect x="2527.9" y="1513.5" width="24" height="3" fill="#dcdcdc"/></svg></div>
<div id="taskbar" class="rg " style="left:0px;top:1528px;width:2559px;height:72px;background:#272727;"><svg width="2559" height="72" viewBox="0 1528 2559 72"><rect x="0" y="1528" width="2559" height="1.6" fill="#474747"/><defs><linearGradient id="wg" x1="0" y1="0" x2="1" y2="1"><stop offset="0" stop-color="#7bdcff"/><stop offset="1" stop-color="#1595ee"/></linearGradient><linearGradient id="sg" x1="0" y1="0" x2="0" y2="1"><stop offset="0" stop-color="#4a4a4a"/><stop offset="1" stop-color="#3a3a3a"/></linearGradient><linearGradient id="fg" x1="0" y1="0" x2="0" y2="1"><stop offset="0" stop-color="#ffd867"/><stop offset="1" stop-color="#f3b32e"/></linearGradient><linearGradient id="cp1" x1="0" y1="0" x2="1" y2="1"><stop offset="0" stop-color="#2bd06c"/><stop offset="0.5" stop-color="#f9c62b"/><stop offset="1" stop-color="#f0642d"/></linearGradient><linearGradient id="cp2" x1="0" y1="0" x2="1" y2="1"><stop offset="0" stop-color="#2b7cf0"/><stop offset="0.55" stop-color="#b05ce6"/><stop offset="1" stop-color="#f36a8c"/></linearGradient><linearGradient id="cl" x1="0" y1="0" x2="0" y2="1"><stop offset="0" stop-color="#f4f8ff"/><stop offset="1" stop-color="#8fb4e8"/></linearGradient></defs><rect x="31.2" y="1547.5" width="16.3" height="16.3" fill="url(#wg)" rx="1"/><rect x="49.2" y="1547.5" width="16.3" height="16.3" fill="url(#wg)" rx="1"/><rect x="31.2" y="1565.5" width="16.3" height="16.3" fill="url(#wg)" rx="1"/><rect x="49.2" y="1565.5" width="16.3" height="16.3" fill="url(#wg)" rx="1"/><rect x="86.1" y="1540" width="329.9" height="47.5" fill="url(#sg)" rx="23.7" stroke="#5c5c5c" stroke-width="1"/><circle cx="113" cy="1563.2" r="7.8" fill="none" stroke="#e8e8e8" stroke-width="2.2"/><line x1="118.6" y1="1568.8" x2="125" y2="1574.4" stroke="#e8e8e8" stroke-width="2.6" stroke-linecap="round"/><text x="142.6" y="1572.5" font-size="21.6" fill="#eeeeee" textLength="77.4" lengthAdjust="spacingAndGlyphs" stroke="#424242" stroke-width="0.28">Procurar</text><rect x="434" y="1556.5" width="26.9" height="23.5" fill="#565656" rx="2.5"/><rect x="443.1" y="1547.2" width="26.9" height="24.2" fill="#f4f4f4" rx="2.5"/><path d="M443.1 1556.5 H458.4 Q460.9 1556.5 460.9 1559 V1571.4 H445.6 Q443.1 1571.4 443.1 1568.9 Z" fill="#b8b8b8"/><defs><linearGradient id="cpl" x1="0" y1="0" x2="0" y2="1"><stop offset="0" stop-color="#1a9cf2"/><stop offset="0.45" stop-color="#2fb98f"/><stop offset="0.75" stop-color="#b9cf2a"/><stop offset="1" stop-color="#f7c40c"/></linearGradient><linearGradient id="cpr" x1="0" y1="0" x2="0" y2="1"><stop offset="0" stop-color="#a855f0"/><stop offset="0.45" stop-color="#e8559c"/><stop offset="1" stop-color="#fb9a4a"/></linearGradient></defs><path d="M518.6 1549 H521.8 Q525.4 1549.2 526.6 1552.6 L528.4 1558 H522.4 L520.6 1553 Q519.8 1550.2 518.6 1549 Z" fill="#1552c9"/><path d="M516.4 1579 H513.2 Q509.6 1578.8 508.4 1575.4 L506.6 1570 H512.6 L514.4 1575 Q515.2 1577.8 516.4 1579 Z" fill="#f0552d"/><path d="M509.6 1549 H519 Q521.6 1549.2 520.8 1552 L515.8 1568.6 Q514.8 1571.4 512 1571.4 H505.6 Q500.6 1571.2 501.8 1566.4 L505.4 1552.6 Q506.4 1549.2 509.6 1549 Z" fill="url(#cpl)"/><path d="M525.4 1579 H516 Q513.4 1578.8 514.2 1576 L519.2 1559.4 Q520.2 1556.6 523 1556.6 H529.4 Q534.4 1556.8 533.2 1561.6 L529.6 1575.4 Q528.6 1578.8 525.4 1579 Z" fill="url(#cpr)"/><path d="M566 1552 Q566 1548 570 1548 H578.6 Q580.4 1548 581.6 1549.4 L583.6 1551.6 H598 Q602 1551.6 602 1555.6 V1576.6 Q602 1580.6 598 1580.6 H570 Q566 1580.6 566 1576.6 Z" fill="#e7a922"/><rect x="566" y="1552.6" width="36" height="28" fill="url(#fg)" rx="3"/><path d="M572 1580.6 V1574 Q572 1570.4 575.6 1570.4 H592.4 Q596 1570.4 596 1574 V1580.6 Z" fill="#1b8fe6"/><rect x="577" y="1574.2" width="14" height="2.2" fill="#1266b4" rx="1"/><rect x="579.9" y="1588.6" width="9" height="4" fill="#8c8c8c" rx="2"/><rect x="620.3" y="1534.7" width="59.3" height="59.1" fill="#353535" rx="6" stroke="#434343" stroke-width="1"/><polygon points="637.4,1551 669.4,1551 666.9,1581.7 637.4,1581.7" fill="#7d0a2c"/><polygon points="633,1549 637.6,1546.2 637.6,1572.4 633,1573.8" fill="#ee5c86"/><rect x="637.6" y="1546" width="25.8" height="26.4" fill="#e30f52"/><text x="644.6" y="1566.4" font-size="20" fill="#fff" textLength="12.4" lengthAdjust="spacingAndGlyphs" font-weight="bold">A</text><text x="643" y="1579.6" font-size="7.4" fill="#f4dfe4" textLength="15.2" lengthAdjust="spacingAndGlyphs" font-weight="bold">CAD</text><rect x="638" y="1588.2" width="24" height="4.4" fill="#4cc2ff" rx="2.2"/><rect x="700.2" y="1547.9" width="30.9" height="29.2" fill="#0c0a4e" stroke="#8bbcf5" stroke-width="1.8"/><text x="706" y="1569.4" font-size="19" fill="#8fc0f6" textLength="20" lengthAdjust="spacingAndGlyphs" font-weight="bold">Ps</text><path d="M781.9 1563.9 L766.31 1554.9 A18 18 0 0 1 797.49 1554.9 Z" fill="#ea4335"/><path d="M781.9 1563.9 L797.49 1554.9 A18 18 0 0 1 781.9 1581.9 Z" fill="#fbbc04"/><path d="M781.9 1563.9 L781.9 1581.9 A18 18 0 0 1 766.31 1554.9 Z" fill="#34a853"/><polygon points="781.9,1563.9 797.49,1554.9 789.9,1555.5 781.9,1555.5" fill="#ea4335"/><circle cx="781.9" cy="1563.9" r="8.3" fill="#ffffff"/><circle cx="781.9" cy="1563.9" r="6.6" fill="#4285f4"/><rect x="777.9" y="1588.6" width="9" height="4" fill="#8c8c8c" rx="2"/><circle cx="847.9" cy="1563.9" r="17.6" fill="#1ed760"/><path d="M837 1558 Q848.6 1554.6 859.6 1560" fill="none" stroke="#121212" stroke-width="3.2" stroke-linecap="round"/><path d="M838.4 1564.4 Q848.4 1561.8 857.6 1566.2" fill="none" stroke="#121212" stroke-width="2.7" stroke-linecap="round"/><path d="M839.8 1570.2 Q848 1568.2 855.4 1571.8" fill="none" stroke="#121212" stroke-width="2.2" stroke-linecap="round"/><circle cx="913.8" cy="1563.9" r="18" fill="#5865f2"/><path d="M904.4 1557.6 Q908 1555.6 910.6 1555.4 L911.6 1557 Q913.8 1556.6 916 1557 L917 1555.4 Q919.6 1555.6 923.2 1557.6 Q926.6 1563.6 926 1570 Q922.6 1572.4 919.6 1573 L918.2 1570.8 Q919.6 1570.2 920.4 1569.6 Q913.8 1572.2 907.2 1569.6 Q908 1570.2 909.4 1570.8 L908 1573 Q905 1572.4 901.6 1570 Q901 1563.6 904.4 1557.6 Z" fill="#ffffff"/><ellipse cx="910.2" cy="1564.8" rx="2.1" ry="2.5" fill="#5865f2"/><ellipse cx="917.4" cy="1564.8" rx="2.1" ry="2.5" fill="#5865f2"/><polygon points="964.4,1550 988,1549 990.4,1578.6 964,1580.4" fill="#f4f4f4" stroke="#9a9a9a" stroke-width="0.8"/><polygon points="964.8,1556 988.6,1555 990.2,1578.4 964.2,1580.2" fill="#8fd14f"/><polygon points="964.4,1571 990,1569.6 990.4,1578.6 964,1580.4" fill="#4e9a24"/><ellipse cx="976.6" cy="1566" rx="6.6" ry="5.2" fill="#3a8a1e" stroke="#1f4f10" stroke-width="1"/><circle cx="974.2" cy="1559.6" r="2.4" fill="#f8f8f8" stroke="#333" stroke-width="0.8"/><circle cx="979.6" cy="1559.2" r="2.4" fill="#f8f8f8" stroke="#333" stroke-width="0.8"/><path d="M967 1567.6 H987 M978 1572 V1577 M981 1574.6 H986" fill="none" stroke="#1d3d0f" stroke-width="1"/><path d="M996 1548.2 L984.6 1573.4" fill="none" stroke="#e7a41e" stroke-width="2.6"/><path d="M996.4 1547.4 L995.4 1549.6" fill="none" stroke="#c0392b" stroke-width="2.6"/><polygon points="983.4,1573 985.8,1574 983.6,1577.2" fill="#e8d2a0"/><rect x="975.9" y="1588.6" width="9" height="4" fill="#8c8c8c" rx="2"/><rect x="1028" y="1546.3" width="27" height="26.2" fill="#f0f0f0" rx="3.4"/><rect x="1031" y="1549.4" width="3.8" height="3.8" fill="#d83b1c" rx="0.6"/><rect x="1036.4" y="1549.4" width="3.8" height="3.8" fill="#d83b1c" rx="0.6"/><rect x="1041.8" y="1549.4" width="3.8" height="3.8" fill="#d83b1c" rx="0.6"/><rect x="1031" y="1554.8" width="3.8" height="3.8" fill="#d83b1c" rx="0.6"/><rect x="1031" y="1560.2" width="3.8" height="3.8" fill="#d83b1c" rx="0.6"/><path d="M1043 1557 L1053 1578.4 M1041.6 1573.2 L1060.6 1567" fill="none" stroke="#b9bec5" stroke-width="2.4"/><circle cx="1047" cy="1579.2" r="3" fill="none" stroke="#1d9bf0" stroke-width="2"/><circle cx="1061.2" cy="1566.6" r="3" fill="none" stroke="#1d9bf0" stroke-width="2"/><rect x="1041.7" y="1588.6" width="9" height="4" fill="#8c8c8c" rx="2"/><path d="M1940.6 1574 Q1932.8 1573.4 1932.8 1566.6 Q1933.2 1560.6 1939.6 1560 Q1941.4 1551.2 1950.4 1551 Q1957.6 1551.2 1960 1557.6 Q1968.8 1557.6 1969 1565.8 Q1968.8 1573.4 1961.4 1574 Z" fill="url(#cl)"/><text x="1980" y="1557.8" font-size="18" fill="#fafafa" textLength="35.8" lengthAdjust="spacingAndGlyphs" stroke="#272727" stroke-width="0.28">15°C</text><text x="1980" y="1581.8" font-size="18" fill="#d6d6d6" textLength="69.8" lengthAdjust="spacingAndGlyphs" stroke="#272727" stroke-width="0.28">Nublado</text><path d="M2177.8 1567.6 L2185 1560.6 L2192.4 1567.6" fill="none" stroke="#f0f0f0" stroke-width="1.8"/><path d="M2222.6 1562 A10 10 0 0 1 2241.4 1559.4 M2242 1567 A10 10 0 0 1 2223.4 1569.6" fill="none" stroke="#e8e8e8" stroke-width="1.3"/><path d="M2237.4 1559.6 H2242.4 V1554.6 M2227.4 1569.6 H2222.4 V1574.6" fill="none" stroke="#e8e8e8" stroke-width="1.3"/><circle cx="2238.8" cy="1570" r="5.8" fill="#ff9500"/><path d="M2274.4 1570.6 Q2269 1570.2 2269 1565.4 Q2269.4 1561.4 2273.6 1561 Q2275 1555.4 2280.8 1555.2 Q2285.4 1555.4 2287 1559.6 Q2292.4 1559.8 2292.6 1565 Q2292.4 1570.2 2287.6 1570.6 Z" fill="#8f8f8f"/><line x1="2271" y1="1553.6" x2="2291.4" y2="1574.2" stroke="#262626" stroke-width="3.2"/><line x1="2271" y1="1553.6" x2="2291.4" y2="1574.2" stroke="#d0d0d0" stroke-width="1.3"/><circle cx="2327.6" cy="1563.6" r="10.6" fill="none" stroke="#ececec" stroke-width="1.3"/><ellipse cx="2327.6" cy="1563.6" rx="4.6" ry="10.6" fill="none" stroke="#ececec" stroke-width="1.2"/><path d="M2317.6 1560 H2337.6 M2317.6 1567.4 H2330" fill="none" stroke="#ececec" stroke-width="1.2"/><circle cx="2333.8" cy="1570.4" r="5.6" fill="#262626" stroke="#ececec" stroke-width="1.3"/><line x1="2330" y1="1574.2" x2="2337.6" y2="1566.6" stroke="#ececec" stroke-width="1.3"/><path d="M2353.6 1560.4 H2357.6 L2363 1555.6 V1572.4 L2357.6 1567.6 H2353.6 Z" fill="none" stroke="#ececec" stroke-width="1.3" stroke-linejoin="round"/><path d="M2366.2 1559.6 Q2369 1564 2366.2 1568.4" fill="none" stroke="#ececec" stroke-width="1.3"/><path d="M2369.6 1557 Q2373.8 1564 2369.6 1571" fill="none" stroke="#8a8a8a" stroke-width="1.3"/><path d="M2372.8 1554.6 Q2378.4 1564 2372.8 1573.4" fill="none" stroke="#5a5a5a" stroke-width="1.3"/><rect x="2389.6" y="1557.4" width="20.6" height="14.2" fill="none" rx="3.4" stroke="#ececec" stroke-width="1.4"/><rect x="2392.2" y="1560" width="13.2" height="9" fill="#ececec" rx="1.4"/><rect x="2410.8" y="1561.6" width="2" height="5.8" fill="#ececec" rx="1"/><text x="2488" y="1557.8" font-size="18" fill="#fafafa" textLength="43.2" lengthAdjust="spacingAndGlyphs" stroke="#272727" stroke-width="0.28">16:49</text><text x="2438.4" y="1581.8" font-size="18" fill="#fafafa" textLength="92.8" lengthAdjust="spacingAndGlyphs" stroke="#272727" stroke-width="0.28">14/11/2025</text></svg></div>
</body></html>
